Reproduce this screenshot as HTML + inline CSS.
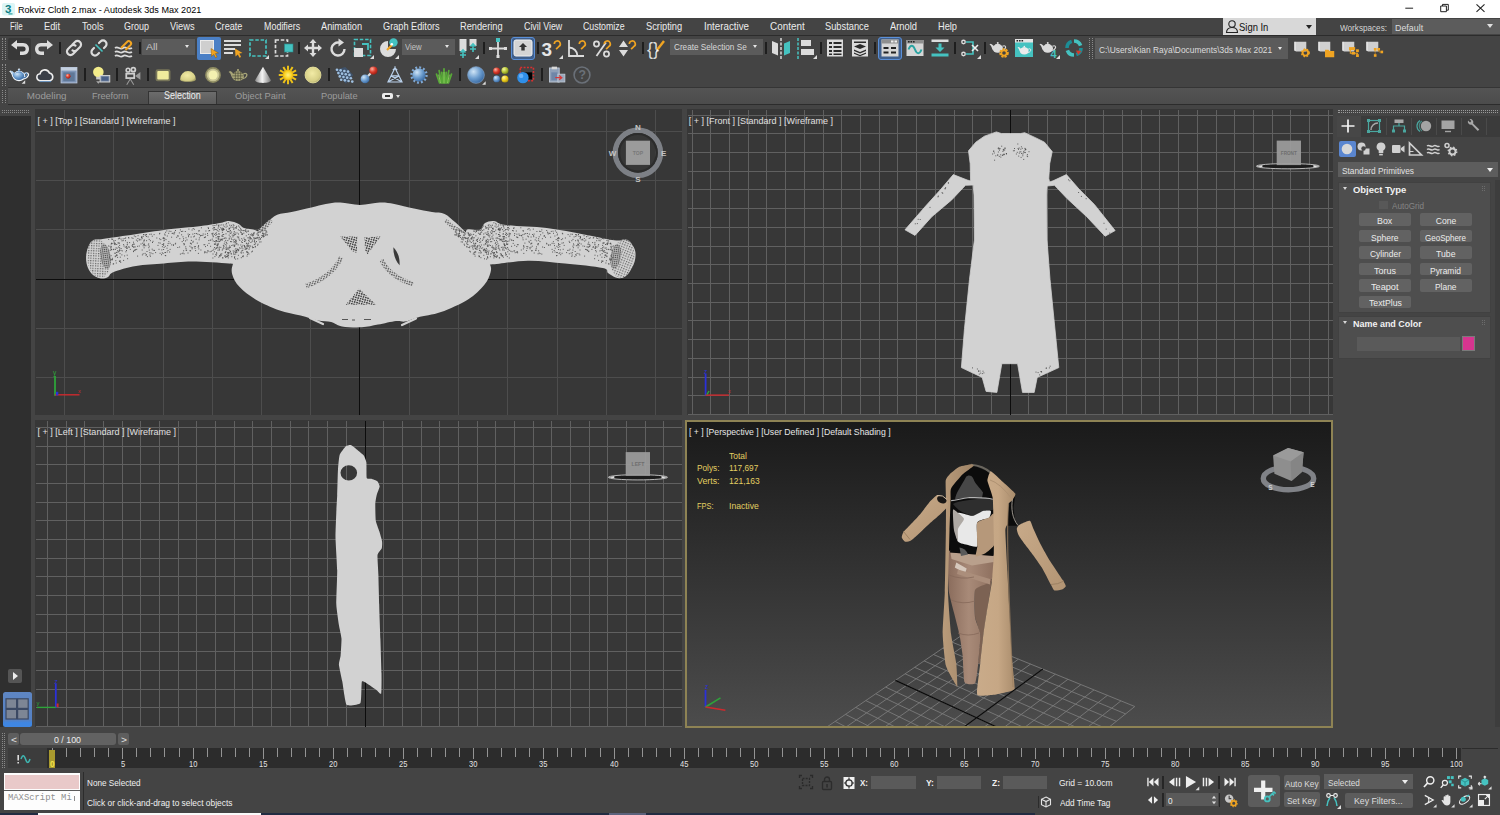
<!DOCTYPE html>
<html lang="en"><head><meta charset="utf-8"><title>Rokviz Cloth 2.max - Autodesk 3ds Max 2021</title>
<style>
*{box-sizing:border-box;margin:0;padding:0}
html,body{width:1500px;height:815px;overflow:hidden;background:#444;}
body{position:relative;font-family:"Liberation Sans",sans-serif;font-size:11px;color:#e4e4e4;}
.a{position:absolute}
.t{position:absolute;white-space:nowrap;line-height:1}
#title{left:0;top:0;width:1500px;height:18px;background:#fff;color:#000}
#menu{left:0;top:18px;width:1500px;height:18px;background:#444;border-bottom:1px solid #2c2c2c}
#menu .t{top:3px;font-size:11px;color:#e8e8e8}
  .vp{position:absolute;background:#373737;overflow:hidden}
.vl{position:absolute;white-space:nowrap;font-size:10px;color:#d8d8d8;left:4px;top:5px;line-height:1;letter-spacing:0}
.btn{position:absolute;background:#646464;border-radius:2px;color:#e6e6e6;font-size:10px;text-align:center;line-height:12px;height:12px}
</style></head>
<body>
<div id="title" class="a"><svg class="a" style="left:1px;top:2px" width="16" height="15" viewBox="0 0 16 15"><rect x="1" y="1" width="13" height="12.5" rx="2" fill="#dcf5f5"/><text x="4" y="10.6" font-family="Liberation Sans, sans-serif" font-size="11.5" font-weight="bold" fill="#0e7d84">3</text><rect x="7.5" y="11.3" width="4" height="1.2" fill="#2aa3a6"/></svg><div class="t" style="left:18.0px;top:4.8px;font-size:9.6px;color:#000;transform:scaleX(0.947);transform-origin:0 0;">Rokviz Cloth 2.max - Autodesk 3ds Max 2021</div><svg class="a" style="left:1400px;top:0" width="100" height="18" viewBox="0 0 100 18"><path d="M5.3 8.2h7.8" stroke="#222" stroke-width="1" fill="none"/><path d="M40.7 6h5.7v5.7h-5.700z M42.500 6v-1.600h5.800v5.800h-1.800" stroke="#222" stroke-width="1" fill="none"/><path d="M76.500 4.300l8 7.500M84.500 4.300l-8 7.500" stroke="#222" stroke-width="1.1" fill="none"/></svg></div>
<div id="menu" class="a"><div class="t" style="left:10.3px;top:4.1px;font-size:10.2px;color:#ececec;transform:scaleX(0.773);transform-origin:0 0;">File</div><div class="t" style="left:43.7px;top:4.1px;font-size:10.2px;color:#ececec;transform:scaleX(0.910);transform-origin:0 0;">Edit</div><div class="t" style="left:81.7px;top:4.1px;font-size:10.2px;color:#ececec;transform:scaleX(0.907);transform-origin:0 0;">Tools</div><div class="t" style="left:123.7px;top:4.1px;font-size:10.2px;color:#ececec;transform:scaleX(0.882);transform-origin:0 0;">Group</div><div class="t" style="left:170.0px;top:4.1px;font-size:10.2px;color:#ececec;transform:scaleX(0.914);transform-origin:0 0;">Views</div><div class="t" style="left:215.0px;top:4.1px;font-size:10.2px;color:#ececec;transform:scaleX(0.898);transform-origin:0 0;">Create</div><div class="t" style="left:263.7px;top:4.1px;font-size:10.2px;color:#ececec;transform:scaleX(0.877);transform-origin:0 0;">Modifiers</div><div class="t" style="left:320.8px;top:4.1px;font-size:10.2px;color:#ececec;transform:scaleX(0.908);transform-origin:0 0;">Animation</div><div class="t" style="left:383.3px;top:4.1px;font-size:10.2px;color:#ececec;transform:scaleX(0.901);transform-origin:0 0;">Graph Editors</div><div class="t" style="left:460.3px;top:4.1px;font-size:10.2px;color:#ececec;transform:scaleX(0.907);transform-origin:0 0;">Rendering</div><div class="t" style="left:523.7px;top:4.1px;font-size:10.2px;color:#ececec;transform:scaleX(0.870);transform-origin:0 0;">Civil View</div><div class="t" style="left:583.3px;top:4.1px;font-size:10.2px;color:#ececec;transform:scaleX(0.865);transform-origin:0 0;">Customize</div><div class="t" style="left:646.3px;top:4.1px;font-size:10.2px;color:#ececec;transform:scaleX(0.912);transform-origin:0 0;">Scripting</div><div class="t" style="left:703.7px;top:4.1px;font-size:10.2px;color:#ececec;transform:scaleX(0.956);transform-origin:0 0;">Interactive</div><div class="t" style="left:770.0px;top:4.1px;font-size:10.2px;color:#ececec;transform:scaleX(0.971);transform-origin:0 0;">Content</div><div class="t" style="left:825.3px;top:4.1px;font-size:10.2px;color:#ececec;transform:scaleX(0.911);transform-origin:0 0;">Substance</div><div class="t" style="left:890.0px;top:4.1px;font-size:10.2px;color:#ececec;transform:scaleX(0.916);transform-origin:0 0;">Arnold</div><div class="t" style="left:937.5px;top:4.1px;font-size:10.2px;color:#ececec;transform:scaleX(0.906);transform-origin:0 0;">Help</div><div class="a" style="left:1223px;top:0;width:93px;height:17px;background:#d8d8d8"></div><svg class="a" style="left:1225px;top:1px" width="14" height="15" viewBox="0 0 14 15"><circle cx="7" cy="5" r="3.2" fill="none" stroke="#222" stroke-width="1.1"/><path d="M1.5 13.5c0-3 2-5 5.5-5s5.5 2 5.5 5z" fill="none" stroke="#222" stroke-width="1.1"/></svg><div class="t" style="left:1239.0px;top:4.7px;font-size:10.2px;color:#111;transform:scaleX(0.926);transform-origin:0 0;">Sign In</div><div class="a" style="left:1306px;top:7px;width:0;height:0;border-left:3px solid transparent;border-right:3px solid transparent;border-top:4px solid #222"></div><div class="t" style="left:1340.0px;top:5.7px;font-size:8.8px;color:#d4d4d4;transform:scaleX(0.927);transform-origin:0 0;">Workspaces:</div><div class="a" style="left:1392px;top:1px;width:108px;height:15px;background:#5c5c5c"></div><div class="t" style="left:1394.6px;top:5.7px;font-size:8.8px;color:#dcdcdc;transform:scaleX(1.008);transform-origin:0 0;">Default</div><div class="a" style="left:1487px;top:6px;width:0;height:0;border-left:3px solid transparent;border-right:3px solid transparent;border-top:4px solid #e0e0e0"></div></div>
<svg class="a" width="0" height="0"><defs><radialGradient id="gb" cx=".35" cy=".3" r=".8"><stop offset="0" stop-color="#cfe4f6"/><stop offset=".5" stop-color="#6f9fd0"/><stop offset="1" stop-color="#2e5f9a"/></radialGradient><radialGradient id="gy" cx=".45" cy=".4" r=".7"><stop offset="0" stop-color="#f2eba6"/><stop offset=".7" stop-color="#d6cf86"/><stop offset="1" stop-color="#8d8957"/></radialGradient><radialGradient id="gr" cx=".35" cy=".3" r=".8"><stop offset="0" stop-color="#ffb0a0"/><stop offset=".5" stop-color="#d83a2a"/><stop offset="1" stop-color="#8a1810"/></radialGradient><radialGradient id="gg" cx=".35" cy=".3" r=".8"><stop offset="0" stop-color="#f4f4a0"/><stop offset=".5" stop-color="#b8c838"/><stop offset="1" stop-color="#6a7a18"/></radialGradient><radialGradient id="gyy" cx=".35" cy=".3" r=".8"><stop offset="0" stop-color="#fff6a0"/><stop offset=".5" stop-color="#f0d020"/><stop offset="1" stop-color="#a08808"/></radialGradient><radialGradient id="gsun" cx=".5" cy=".5" r=".5"><stop offset="0" stop-color="#fff080"/><stop offset=".7" stop-color="#f8d020"/><stop offset="1" stop-color="#e0a810"/></radialGradient><linearGradient id="gcone" x1="0" y1="0" x2="1" y2="0"><stop offset="0" stop-color="#8a8a8a"/><stop offset=".45" stop-color="#f4f4f4"/><stop offset="1" stop-color="#7a7a7a"/></linearGradient></defs></svg><div class="a" style="left:2px;top:38px;width:4px;height:22px;border-left:1px dotted #8a8a8a;border-right:1px dotted #8a8a8a"></div><div class="a" style="left:2px;top:64px;width:4px;height:22px;border-left:1px dotted #8a8a8a;border-right:1px dotted #8a8a8a"></div><div class="a" style="left:8px;top:38px;width:23px;height:22px;background:#383838;border-radius:2px"></div><div class="a" style="left:197px;top:37px;width:24px;height:23px;background:#4b80c6;border-radius:2px"></div><div class="a" style="left:511px;top:37px;width:24px;height:23px;background:#3f5f8c;border:1.500px solid #5a8fd8;border-radius:3px"></div><div class="a" style="left:878px;top:37px;width:24px;height:23px;background:#3f5f8c;border:1.500px solid #5a8fd8;border-radius:3px"></div><svg class="a" style="left:7.7px;top:35.5px" width="24" height="24" viewBox="0 0 24 24"><path d="M3 9l6-5v3h6c4 0 6 3 6 6s-2 6-6 6h-3v-3.5h3c2 0 2.6-1.2 2.6-2.5s-.6-2.5-2.6-2.5H9v3z" fill="#dcdcdc"/></svg><svg class="a" style="left:32.0px;top:35.5px" width="24" height="24" viewBox="0 0 24 24"><path d="M21 9l-6-5v3H9c-4 0-6 3-6 6s2 6 6 6h3v-3.5H9c-2 0-2.6-1.2-2.6-2.5S7 10.5 9 10.500h6v3z" fill="#dcdcdc"/></svg><svg class="a" style="left:62.0px;top:35.5px" width="24" height="24" viewBox="0 0 24 24"><g fill="none" stroke="#dcdcdc" stroke-width="2.2" stroke-linecap="round"><path d="M10.5 8.500l2.5-2.500a3.4 3.4 0 0 1 5 5l-3 3a3.4 3.4 0 0 1-4.5 .3"/><path d="M13.5 15.500l-2.5 2.500a3.4 3.4 0 0 1-5-5l3-3a3.4 3.4 0 0 1 4.5-.3"/></g></svg><svg class="a" style="left:87.0px;top:35.5px" width="24" height="24" viewBox="0 0 24 24"><g fill="none" stroke="#dcdcdc" stroke-width="2.2" stroke-linecap="round"><path d="M12 7l1.5-1.500a3.4 3.4 0 0 1 5 5L17 12"/><path d="M12 17l-1.5 1.500a3.4 3.4 0 0 1-5-5L7 12"/></g><path d="M8.5 8.500l7 7" stroke="#45c2c0" stroke-width="1.6"/></svg><svg class="a" style="left:112.0px;top:35.5px" width="24" height="24" viewBox="0 0 24 24"><g fill="none" stroke="#dcdcdc" stroke-width="1.7"><path d="M3 12c3-2.5 5 2.5 8 0s5 2.5 9 0"/><path d="M3 16c3-2.5 5 2.5 8 0s5 2.5 9 0"/><path d="M3 20c3-2.5 5 2.5 8 0s5 2.5 9 0"/></g><path d="M9 12l6-6a2.3 2.3 0 0 1 3.5 3l-5 5" fill="none" stroke="#f0a422" stroke-width="2"/></svg><svg class="a" style="left:196.7px;top:35.5px" width="24" height="24" viewBox="0 0 24 24"><rect x="3.5" y="4.5" width="13" height="13" fill="#cfcfcf" stroke="#ececec" stroke-width="1"/><path d="M14 12.500l7.5 4.5-3.2.6 1.8 3.4-1.6.8-1.7-3.4-2.3 2z" fill="#f0a422" stroke="#7a4b00" stroke-width=".4"/></svg><svg class="a" style="left:221.0px;top:35.5px" width="24" height="24" viewBox="0 0 24 24"><g fill="#dcdcdc"><rect x="3" y="4" width="17" height="2"/><rect x="3" y="8" width="17" height="2"/><rect x="3" y="12" width="11" height="2"/><rect x="3" y="16" width="9" height="2"/></g><path d="M14 12.500l7.5 4.5-3.2.6 1.8 3.4-1.6.8-1.7-3.4-2.3 2z" fill="#f0a422"/></svg><svg class="a" style="left:246.3px;top:35.5px" width="24" height="24" viewBox="0 0 24 24"><rect x="4" y="4" width="16" height="16" fill="none" stroke="#45c2c0" stroke-width="1.7" stroke-dasharray="3.5 1.8"/><path d="M23 19v4h-4z" fill="#ddd"/></svg><svg class="a" style="left:271.7px;top:35.5px" width="24" height="24" viewBox="0 0 24 24"><rect x="3.5" y="4" width="12" height="16" fill="none" stroke="#dcdcdc" stroke-width="1.7" stroke-dasharray="3.5 1.8"/><rect x="12.5" y="8" width="8.5" height="8" fill="#45c2c0" stroke="#2a8b8a" stroke-width=".6"/></svg><svg class="a" style="left:301.3px;top:35.5px" width="24" height="24" viewBox="0 0 24 24"><path d="M12 3l3.5 4h-2.300v3.800H17V8.500l4 3.5-4 3.500v-2.300h-3.800V17h2.300L12 21l-3.5-4h2.300v-3.800H7v2.300L3 12l4-3.500v2.300h3.800V7H8.500z" fill="#dcdcdc"/></svg><svg class="a" style="left:326.3px;top:35.5px" width="24" height="24" viewBox="0 0 24 24"><path d="M18.5 13a6.5 6.5 0 1 1-5-6.3" fill="none" stroke="#dcdcdc" stroke-width="2.4"/><path d="M12.5 2.500l5.5 4-5.5 4z" fill="#dcdcdc"/></svg><svg class="a" style="left:351.3px;top:35.5px" width="24" height="24" viewBox="0 0 24 24"><rect x="3.5" y="3.5" width="16" height="16" fill="none" stroke="#45c2c0" stroke-width="1.6" stroke-dasharray="3.5 1.8"/><rect x="3" y="12" width="9" height="9" fill="#dcdcdc"/><path d="M11 8h6v6" fill="none" stroke="#45c2c0" stroke-width="1.8"/><path d="M23 19v4h-4z" fill="#ddd"/></svg><svg class="a" style="left:376.3px;top:35.5px" width="24" height="24" viewBox="0 0 24 24"><path d="M12 13V5a8 8 0 1 0 8 8z" fill="#dcdcdc"/><circle cx="17.5" cy="6.5" r="4.2" fill="#45c2c0"/><path d="M11 14l5-5" stroke="#f0a422" stroke-width="2.2"/><circle cx="15.8" cy="8.2" r="1.3" fill="#fff"/><path d="M23 19v4h-4z" fill="#ddd"/></svg><svg class="a" style="left:456.3px;top:35.5px" width="24" height="24" viewBox="0 0 24 24"><rect x="3.500" y="3" width="7" height="12" fill="#dcdcdc"/><rect x="13.500" y="3" width="7" height="7" fill="#dcdcdc"/><g stroke="#45c2c0" stroke-width="1.600" fill="none"><path d="M7 22v-8M4 19h6M4.500 16.500L7 14l2.500 2.500"/><path d="M17 16V8M14 13h6M14.500 10.500L17 8l2.500 2.500"/></g><path d="M23 19v4h-4z" fill="#ddd"/></svg><svg class="a" style="left:485.5px;top:35.5px" width="24" height="24" viewBox="0 0 24 24"><path d="M12 4v17M4 12.500h16" stroke="#dcdcdc" stroke-width="1.8"/><rect x="10" y="2" width="4" height="4" fill="#45c2c0"/><rect x="3" y="11" width="3" height="3" fill="#dcdcdc"/><rect x="18" y="11" width="3" height="3" fill="#dcdcdc"/><rect x="10.5" y="19" width="3" height="3" fill="#dcdcdc"/></svg><svg class="a" style="left:510.8px;top:35.5px" width="24" height="24" viewBox="0 0 24 24"><rect x="3" y="4" width="18" height="16" rx="2" fill="#d4d4d4" stroke="#f0f0f0" stroke-width="1"/><path d="M12 7l4 4h-2.300v3.500h-3.400V11H8z" fill="#333"/></svg><svg class="a" style="left:539.7px;top:35.5px" width="24" height="24" viewBox="0 0 24 24"><text x="1.500" y="20.300" font-family="Liberation Sans,sans-serif" font-weight="bold" font-size="19" fill="#e6e6e6">3</text><path d="M14.3 8a3 3 0 1 1 4.4 2.6l-2.6 2.600" fill="none" stroke="#f0a422" stroke-width="1.700"/><path d="M23 19v4h-4z" fill="#ddd"/></svg><svg class="a" style="left:564.7px;top:35.5px" width="24" height="24" viewBox="0 0 24 24"><path d="M4 4v16h15M4 11.500a8.500 8.500 0 0 1 8.500 8.500" fill="none" stroke="#dcdcdc" stroke-width="1.800"/><path d="M14.3 8a3 3 0 1 1 4.4 2.6l-2.6 2.600" fill="none" stroke="#f0a422" stroke-width="1.700"/></svg><svg class="a" style="left:589.7px;top:35.5px" width="24" height="24" viewBox="0 0 24 24"><circle cx="6.500" cy="8" r="2.600" fill="none" stroke="#dcdcdc" stroke-width="1.700"/><circle cx="16.500" cy="18" r="2.600" fill="none" stroke="#dcdcdc" stroke-width="1.700"/><path d="M16 6.500L6.500 20" stroke="#dcdcdc" stroke-width="1.800"/><path d="M14.3 8a3 3 0 1 1 4.4 2.6l-2.6 2.600" fill="none" stroke="#f0a422" stroke-width="1.700"/></svg><svg class="a" style="left:614.7px;top:35.5px" width="24" height="24" viewBox="0 0 24 24"><path d="M4 11l4.500-6.500L13 11zM4 14l4.500 6.500L13 14z" fill="#dcdcdc"/><path d="M14.3 8a3 3 0 1 1 4.4 2.6l-2.6 2.600" fill="none" stroke="#f0a422" stroke-width="1.700"/></svg><svg class="a" style="left:644.7px;top:35.5px" width="24" height="24" viewBox="0 0 24 24"><text x="2" y="19" font-family="Liberation Sans,sans-serif" font-size="18" fill="#dcdcdc">{}</text><path d="M12 14l7-9" stroke="#f0a422" stroke-width="2.4"/><path d="M11 16l1-3 1.5 1.200z" fill="#fff"/></svg><svg class="a" style="left:768.8px;top:35.5px" width="24" height="24" viewBox="0 0 24 24"><path d="M3 5l6 2.500v12L3 17z" fill="#dcdcdc"/><path d="M21 5l-6 2.500v12l6-2.500z" fill="#45c2c0"/><path d="M12 2v21" stroke="#eee" stroke-width="1.3" stroke-dasharray="3 1.5"/></svg><svg class="a" style="left:793.8px;top:35.5px" width="24" height="24" viewBox="0 0 24 24"><path d="M4 2v21" stroke="#45c2c0" stroke-width="1.5" stroke-dasharray="3 1.5"/><rect x="7" y="4" width="10" height="6" fill="#dcdcdc"/><rect x="7" y="13" width="13" height="6" fill="#dcdcdc"/><path d="M23 19v4h-4z" fill="#ddd"/></svg><svg class="a" style="left:823.0px;top:35.5px" width="24" height="24" viewBox="0 0 24 24"><rect x="4" y="3.5" width="16" height="17" fill="#dcdcdc"/><g fill="#2b2b2b"><rect x="6" y="6" width="3" height="2"/><rect x="10.5" y="6" width="8" height="2"/><rect x="6" y="10" width="3" height="2"/><rect x="10.5" y="10" width="8" height="2"/><rect x="6" y="14" width="3" height="2"/><rect x="10.5" y="14" width="8" height="2"/><rect x="6" y="17.5" width="3" height="1.5"/><rect x="10.5" y="17.5" width="8" height="1.5"/></g></svg><svg class="a" style="left:848.0px;top:35.5px" width="24" height="24" viewBox="0 0 24 24"><rect x="4" y="3.5" width="16" height="17" fill="#dcdcdc"/><rect x="6" y="5.5" width="12" height="1.5" fill="#2b2b2b"/><g fill="#2b2b2b"><path d="M12 8l6 2.5-6 2.5-6-2.500z"/><path d="M6 13.500l6 2.5 6-2.500v1.500l-6 2.5-6-2.500z"/><path d="M6 16.500l6 2.5 6-2.500v1.300l-6 2.4-6-2.400z"/></g></svg><svg class="a" style="left:877.7px;top:35.5px" width="24" height="24" viewBox="0 0 24 24"><rect x="3.5" y="3.5" width="17" height="17" fill="#d6d6d6"/><rect x="3.5" y="3.5" width="17" height="4" fill="#8f8f8f"/><rect x="13" y="4.5" width="2.5" height="2" fill="#eee"/><rect x="16.5" y="4.5" width="2.5" height="2" fill="#eee"/><g fill="#222"><rect x="5.5" y="11" width="5" height="2"/><rect x="13" y="11" width="5" height="2"/><rect x="5.5" y="15.5" width="5" height="2"/><rect x="13" y="15.5" width="5" height="2"/></g></svg><svg class="a" style="left:902.7px;top:35.5px" width="24" height="24" viewBox="0 0 24 24"><rect x="3.5" y="4" width="17" height="16" fill="#d6d6d6"/><rect x="3.5" y="4" width="17" height="3.5" fill="#8f8f8f"/><g fill="#222"><rect x="5" y="5" width="1.6" height="1.5"/><rect x="7.5" y="5" width="1.6" height="1.5"/><rect x="10" y="5" width="1.6" height="1.5"/></g><path d="M5.5 13.500c2-5 4.5-5 6.5 0s4.5 5 6.5 0" fill="none" stroke="#2aa3a1" stroke-width="2"/></svg><svg class="a" style="left:927.7px;top:35.5px" width="24" height="24" viewBox="0 0 24 24"><rect x="3.5" y="3.5" width="17" height="2.5" fill="#dcdcdc"/><rect x="3.5" y="17.5" width="17" height="3" fill="#45c2c0"/><path d="M10.5 7.500h3v4h3l-4.5 4.5-4.5-4.500h3z" fill="#45c2c0"/></svg><svg class="a" style="left:958.0px;top:35.5px" width="24" height="24" viewBox="0 0 24 24"><g fill="none" stroke="#45c2c0" stroke-width="1.6"><path d="M8 6h7v12H8"/></g><path d="M14 9l6 6M20 9l-6 6" stroke="#eee" stroke-width="1.6"/><g fill="#ddd"><circle cx="5.5" cy="6" r="2.4"/><circle cx="5.5" cy="18" r="2.4"/></g><g fill="#444"><circle cx="5.5" cy="6" r="1"/><circle cx="5.5" cy="18" r="1"/></g><path d="M23 19v4h-4z" fill="#ddd"/></svg><svg class="a" style="left:987.0px;top:35.5px" width="24" height="24" viewBox="0 0 24 24"><g fill="#dcdcdc" stroke="none" stroke-width="0" transform="translate(1,1.500) scale(.780)"><path d="M6.200 15.800C4.300 13.500 4.800 10.300 1.800 9l1.700-1C6.300 9 6.800 11 8.300 12z"/><ellipse cx="12.500" cy="14" rx="6.800" ry="5.400"/><path d="M8.800 9.500c1.200-1.500 6.200-1.500 7.400 0z"/><circle cx="12.500" cy="7" r="1.300"/><path d="M18.600 11.200c3-1.600 4.700.300 3.700 2.400s-2.600 2.900-4.200 3.100" fill="none" stroke="#dcdcdc" stroke-width="1.500"/></g><circle cx="17" cy="17" r="3.600" fill="none" stroke="#f0a422" stroke-width="2.400" stroke-dasharray="2 1"/><circle cx="17" cy="17" r="2.600" fill="none" stroke="#f0a422" stroke-width="1.600"/></svg><svg class="a" style="left:1012.0px;top:35.5px" width="24" height="24" viewBox="0 0 24 24"><rect x="3" y="3" width="18" height="18" fill="#45c2c0"/><rect x="3" y="3" width="18" height="3.5" fill="#e4e4e4"/><g fill="#222"><rect x="4.5" y="4" width="1.6" height="1.5"/><rect x="7" y="4" width="1.6" height="1.5"/><rect x="9.5" y="4" width="1.6" height="1.5"/></g><g fill="#ececec" stroke="none" stroke-width="0" transform="translate(4.300,6) scale(.640)"><path d="M6.200 15.800C4.300 13.500 4.800 10.300 1.800 9l1.700-1C6.300 9 6.800 11 8.300 12z"/><ellipse cx="12.500" cy="14" rx="6.800" ry="5.400"/><path d="M8.800 9.500c1.200-1.500 6.200-1.500 7.400 0z"/><circle cx="12.500" cy="7" r="1.300"/><path d="M18.600 11.200c3-1.600 4.700.300 3.700 2.400s-2.600 2.900-4.200 3.100" fill="none" stroke="#ececec" stroke-width="1.500"/></g></svg><svg class="a" style="left:1037.0px;top:35.5px" width="24" height="24" viewBox="0 0 24 24"><g fill="#dcdcdc" stroke="none" stroke-width="0" transform="translate(1,1.500) scale(.780)"><path d="M6.200 15.800C4.300 13.500 4.800 10.300 1.800 9l1.700-1C6.300 9 6.800 11 8.300 12z"/><ellipse cx="12.500" cy="14" rx="6.800" ry="5.400"/><path d="M8.800 9.500c1.200-1.500 6.200-1.500 7.400 0z"/><circle cx="12.500" cy="7" r="1.300"/><path d="M18.600 11.200c3-1.600 4.700.300 3.700 2.400s-2.600 2.900-4.200 3.100" fill="none" stroke="#dcdcdc" stroke-width="1.500"/></g><text x="13.500" y="22" font-family="Liberation Sans,sans-serif" font-weight="bold" font-size="11" fill="#45c2c0">4</text><path d="M23 19v4h-4z" fill="#ddd"/></svg><svg class="a" style="left:1062.0px;top:35.5px" width="24" height="24" viewBox="0 0 24 24"><g fill="none" stroke-width="3.6"><path d="M12 5a7 7 0 0 1 6.600 4.700" stroke="#45c2c0"/><path d="M19 12a7 7 0 0 1-4.700 6.600" stroke="#1c8d96"/><path d="M12 19a7 7 0 0 1-6.600-4.700" stroke="#45c2c0"/><path d="M5 12a7 7 0 0 1 4.700-6.600" stroke="#1c8d96"/></g><path d="M14 14.500l5.500 .5-3.300 3.800z" fill="#d43a2a"/></svg><svg class="a" style="left:1288.8px;top:35.5px" width="24" height="24" viewBox="0 0 24 24"><g transform="translate(12 12) scale(.880) translate(-12 -12)"><g transform="translate(1,2)"><path d="M4 3h13v11H5.500a1.800 1.800 0 0 1-1.500-2z" fill="#d0d0d0"/><path d="M4 3v10" stroke="#fff" stroke-width="1.200"/></g><circle cx="17" cy="17.500" r="3.200" fill="none" stroke="#f0a422" stroke-width="2.200"/><circle cx="17" cy="17.500" r="4.400" fill="none" stroke="#f0a422" stroke-width="1.400" stroke-dasharray="1.800 1.800"/></g></svg><svg class="a" style="left:1313.0px;top:35.5px" width="24" height="24" viewBox="0 0 24 24"><g transform="translate(12 12) scale(.880) translate(-12 -12)"><g transform="translate(1,2)"><path d="M4 3h13v11H5.500a1.800 1.800 0 0 1-1.500-2z" fill="#d0d0d0"/><path d="M4 3v10" stroke="#fff" stroke-width="1.200"/></g><path d="M12 14h4l1.200 1.500H22.500V22.500H12z" fill="#f0a422"/></g></svg><svg class="a" style="left:1336.8px;top:35.5px" width="24" height="24" viewBox="0 0 24 24"><g transform="translate(12 12) scale(.880) translate(-12 -12)"><g transform="translate(1,2)"><path d="M4 3h13v11H5.500a1.800 1.800 0 0 1-1.500-2z" fill="#d0d0d0"/><path d="M4 3v10" stroke="#fff" stroke-width="1.200"/></g><g fill="#f0a422"><rect x="12" y="11" width="7" height="3.500"/><rect x="15" y="16.500" width="4" height="3"/><rect x="20" y="19" width="3.200" height="3.200"/><rect x="20" y="13.500" width="3.200" height="3.200"/></g><path d="M13.500 14v4h2M19 18h2.500v1" stroke="#f0a422" stroke-width="1.200" fill="none"/></g></svg><svg class="a" style="left:1360.5px;top:35.5px" width="24" height="24" viewBox="0 0 24 24"><g transform="translate(12 12) scale(.880) translate(-12 -12)"><g transform="translate(1,2)"><path d="M4 3h13v11H5.500a1.800 1.800 0 0 1-1.500-2z" fill="#d0d0d0"/><path d="M4 3v10" stroke="#fff" stroke-width="1.200"/></g><g fill="#f0a422"><rect x="13" y="12" width="3" height="3"/><rect x="17" y="12" width="3" height="3"/><rect x="20.500" y="15" width="3" height="3"/><rect x="13" y="19" width="3" height="3"/></g><path d="M14.500 15v4M18.500 15v1.500h2" stroke="#f0a422" stroke-width="1.100" fill="none" stroke-dasharray="1.200 1"/></g></svg><div class="a" style="left:58.5px;top:41.5px;width:2px;height:12.5px;background:#1e1e1e"></div><div class="a" style="left:138.5px;top:41.5px;width:2px;height:12.5px;background:#1e1e1e"></div><div class="a" style="left:297.5px;top:41.5px;width:2px;height:12.5px;background:#1e1e1e"></div><div class="a" style="left:482.5px;top:41.5px;width:2px;height:12.5px;background:#1e1e1e"></div><div class="a" style="left:536.5px;top:41.5px;width:2px;height:12.5px;background:#1e1e1e"></div><div class="a" style="left:641.5px;top:41.5px;width:2px;height:12.5px;background:#1e1e1e"></div><div class="a" style="left:765px;top:41.5px;width:2px;height:12.5px;background:#1e1e1e"></div><div class="a" style="left:820px;top:41.5px;width:2px;height:12.5px;background:#1e1e1e"></div><div class="a" style="left:874px;top:41.5px;width:2px;height:12.5px;background:#1e1e1e"></div><div class="a" style="left:954px;top:41.5px;width:2px;height:12.5px;background:#1e1e1e"></div><div class="a" style="left:983.5px;top:41.5px;width:2px;height:12.5px;background:#1e1e1e"></div><div class="a" style="left:1089px;top:38px;width:4px;height:21px;border-left:1px dotted #8a8a8a;border-right:1px dotted #8a8a8a"></div><div class="a" style="left:142px;top:39px;width:53px;height:15.5px;background:#5b5b5b"></div><div class="t" style="left:145.8px;top:43.2px;font-size:8.8px;color:#c4c4c4;transform:scaleX(1.196);transform-origin:0 0;">All</div><div class="a" style="left:185px;top:44.8px;width:0;height:0;border-left:2.6px solid transparent;border-right:2.6px solid transparent;border-top:3.4px solid #e6e6e6"></div><div class="a" style="left:402px;top:39px;width:53px;height:15.5px;background:#5b5b5b"></div><div class="t" style="left:405.0px;top:43.2px;font-size:8.8px;color:#c4c4c4;transform:scaleX(0.883);transform-origin:0 0;">View</div><div class="a" style="left:445px;top:44.8px;width:0;height:0;border-left:2.6px solid transparent;border-right:2.6px solid transparent;border-top:3.4px solid #e6e6e6"></div><div class="a" style="left:670px;top:39px;width:93px;height:15.5px;background:#5b5b5b"></div><div class="t" style="left:674.0px;top:42.9px;font-size:8.8px;color:#d8d8d8;transform:scaleX(0.929);transform-origin:0 0;">Create Selection Se</div><div class="a" style="left:753px;top:44.8px;width:0;height:0;border-left:2.6px solid transparent;border-right:2.6px solid transparent;border-top:3.4px solid #e6e6e6"></div><div class="a" style="left:1095px;top:38px;width:193px;height:21px;background:#5b5b5b"></div><div class="t" style="left:1099.0px;top:45.6px;font-size:8.8px;color:#dcdcdc;transform:scaleX(0.952);transform-origin:0 0;">C:\Users\Kian Raya\Documents\3ds Max 2021</div><div class="a" style="left:1278px;top:46.5px;width:0;height:0;border-left:2.6px solid transparent;border-right:2.6px solid transparent;border-top:3.4px solid #e6e6e6"></div><svg class="a" style="left:7.0px;top:62.5px" width="24" height="24" viewBox="0 0 24 24"><g transform="translate(12 12) scale(.880) translate(-12 -12)"><g fill="#f2f6fa" stroke="none" stroke-width="0" transform="translate(-1.200,-1.500) scale(1.060)"><path d="M6.200 15.800C4.300 13.500 4.800 10.300 1.800 9l1.700-1C6.300 9 6.800 11 8.300 12z"/><ellipse cx="12.500" cy="14" rx="6.800" ry="5.400"/><path d="M8.800 9.500c1.200-1.500 6.200-1.500 7.400 0z"/><circle cx="12.500" cy="7" r="1.300"/><path d="M18.600 11.200c3-1.600 4.700.300 3.700 2.400s-2.600 2.900-4.200 3.100" fill="none" stroke="#f2f6fa" stroke-width="1.500"/></g><g fill="url(#gb)" stroke="none" stroke-width="0" transform="translate(0.600,0.200) scale(.900)"><path d="M6.200 15.800C4.300 13.500 4.800 10.300 1.800 9l1.700-1C6.300 9 6.800 11 8.300 12z"/><ellipse cx="12.500" cy="14" rx="6.800" ry="5.400"/><path d="M8.800 9.500c1.200-1.500 6.200-1.500 7.400 0z"/><circle cx="12.500" cy="7" r="1.300"/><path d="M18.600 11.200c3-1.600 4.700.300 3.700 2.400s-2.600 2.900-4.200 3.100" fill="none" stroke="url(#gb)" stroke-width="1.500"/></g><path d="M19 18v4h-4z" fill="#ddd"/></g></svg><svg class="a" style="left:32.7px;top:62.5px" width="24" height="24" viewBox="0 0 24 24"><g transform="translate(12 12) scale(.880) translate(-12 -12)"><path d="M7 18.500a4 4 0 0 1-.5-8 5.5 5.5 0 0 1 10.5-.8 4.5 4.5 0 0 1 .5 8.800z" fill="#3a3f48" stroke="#eee" stroke-width="1.8"/><path d="M6 19.500h13" stroke="#5f8fc4" stroke-width="1"/></g></svg><svg class="a" style="left:57.0px;top:62.5px" width="24" height="24" viewBox="0 0 24 24"><g transform="translate(12 12) scale(.880) translate(-12 -12)"><rect x="3" y="3.5" width="18" height="17.5" fill="#7f96b8" stroke="#b9c8de" stroke-width="1"/><rect x="3" y="3.5" width="18" height="3.5" fill="#c4d0e0"/><rect x="5.5" y="9" width="13" height="10" fill="#5f7898"/><circle cx="11" cy="13.5" r="2.8" fill="url(#gr)"/></g></svg><svg class="a" style="left:88.8px;top:62.5px" width="24" height="24" viewBox="0 0 24 24"><g transform="translate(12 12) scale(.880) translate(-12 -12)"><circle cx="9" cy="8.5" r="6" fill="#f3ec8a"/><rect x="6.5" y="14" width="5" height="3" fill="#c9c9c9"/><path d="M6.5 19l2.5 3 2.5-3z" fill="#aaa"/><rect x="11" y="12.5" width="11" height="7.5" fill="#7f8fa8" stroke="#d8d8d8" stroke-width="1"/><rect x="12.5" y="14" width="8" height="4.5" fill="#4a6088"/></g></svg><svg class="a" style="left:119.7px;top:62.5px" width="24" height="24" viewBox="0 0 24 24"><g transform="translate(12 12) scale(.880) translate(-12 -12)"><g fill="#cfcfcf"><circle cx="7.5" cy="6.5" r="3"/><circle cx="13.5" cy="6" r="3.3"/><rect x="4.5" y="9.5" width="11" height="7" /><path d="M15.5 13l6-4.500v9z" fill="#9a9a9a"/></g><g fill="#444"><circle cx="7.5" cy="6.5" r="1.2"/><circle cx="13.5" cy="6" r="1.3"/><rect x="6.5" y="11.5" width="7" height="3"/></g><path d="M10 16.500L6 23M10 16.500l4 6.5" stroke="#9a9a9a" stroke-width="1.2"/></g></svg><svg class="a" style="left:151.0px;top:62.5px" width="24" height="24" viewBox="0 0 24 24"><g transform="translate(12 12) scale(.880) translate(-12 -12)"><rect x="3.5" y="5.5" width="17" height="13.5" rx="2.5" fill="#9a9668" opacity=".6"/><rect x="5.5" y="7.5" width="13" height="9.5" rx="1" fill="#f0eb9c"/></g></svg><svg class="a" style="left:176.0px;top:62.5px" width="24" height="24" viewBox="0 0 24 24"><g transform="translate(12 12) scale(.880) translate(-12 -12)"><path d="M3 17a9 9.5 0 0 1 18 0c0 1.6-4 2.8-9 2.800s-9-1.2-9-2.800z" fill="url(#gy)"/></g></svg><svg class="a" style="left:201.0px;top:62.5px" width="24" height="24" viewBox="0 0 24 24"><g transform="translate(12 12) scale(.880) translate(-12 -12)"><circle cx="12" cy="12" r="9" fill="#8f8c62"/><circle cx="12" cy="12" r="7.2" fill="#c9c595"/><circle cx="12" cy="12" r="5.2" fill="#f4f0b0"/></g></svg><svg class="a" style="left:226.0px;top:62.5px" width="24" height="24" viewBox="0 0 24 24"><g transform="translate(12 12) scale(.880) translate(-12 -12)"><g fill="#a9a678" stroke="none" stroke-width="0" transform="translate(-.500,-.500)"><path d="M6.200 15.800C4.300 13.500 4.800 10.300 1.800 9l1.700-1C6.300 9 6.800 11 8.300 12z"/><ellipse cx="12.500" cy="14" rx="6.800" ry="5.400"/><path d="M8.800 9.500c1.200-1.500 6.200-1.500 7.400 0z"/><circle cx="12.500" cy="7" r="1.300"/><path d="M18.600 11.200c3-1.600 4.700.300 3.700 2.400s-2.600 2.900-4.200 3.100" fill="none" stroke="#a9a678" stroke-width="1.500"/></g><g stroke="#4a4a38" stroke-width=".7" fill="none"><path d="M6 10h12M5.5 13h13M7 16h10M9 7.500v11M12 7v11.500M15 7.500v11"/></g></g></svg><svg class="a" style="left:250.5px;top:62.5px" width="24" height="24" viewBox="0 0 24 24"><g transform="translate(12 12) scale(.880) translate(-12 -12)"><path d="M12 2.500L21 18c0 1.8-4 3-9 3s-9-1.2-9-3z" fill="url(#gcone)"/></g></svg><svg class="a" style="left:276.0px;top:62.5px" width="24" height="24" viewBox="0 0 24 24"><g transform="translate(12 12) scale(.880) translate(-12 -12)"><g stroke="#f0c418" stroke-width="2.2"><path d="M12 12L22.5 12.0"/><path d="M12 12L21.1 17.2"/><path d="M12 12L17.2 21.1"/><path d="M12 12L12.0 22.5"/><path d="M12 12L6.8 21.1"/><path d="M12 12L2.9 17.2"/><path d="M12 12L1.5 12.0"/><path d="M12 12L2.9 6.8"/><path d="M12 12L6.7 2.9"/><path d="M12 12L12.0 1.5"/><path d="M12 12L17.2 2.9"/><path d="M12 12L21.1 6.7"/></g><circle cx="12" cy="12" r="6.2" fill="url(#gsun)"/></g></svg><svg class="a" style="left:300.8px;top:62.5px" width="24" height="24" viewBox="0 0 24 24"><g transform="translate(12 12) scale(.880) translate(-12 -12)"><circle cx="12" cy="12" r="9" fill="url(#gy)" stroke="#e8e29c" stroke-width="1"/></g></svg><svg class="a" style="left:332.0px;top:62.5px" width="24" height="24" viewBox="0 0 24 24"><g transform="translate(12 12) scale(.880) translate(-12 -12)"><path d="M2.5 6l11-3 9 9-8.5 10z" fill="#3c5f8a" opacity=".55"/><circle cx="4.0" cy="6.0" r="1.5" fill="#9fc0e0"/><circle cx="8.2" cy="6.7" r="1.5" fill="#9fc0e0"/><circle cx="12.4" cy="7.4" r="1.5" fill="#9fc0e0"/><circle cx="16.6" cy="8.1" r="1.5" fill="#9fc0e0"/><circle cx="5.6" cy="9.8" r="1.5" fill="#9fc0e0"/><circle cx="9.8" cy="10.5" r="1.5" fill="#9fc0e0"/><circle cx="14.0" cy="11.2" r="1.5" fill="#9fc0e0"/><circle cx="18.2" cy="11.9" r="1.5" fill="#9fc0e0"/><circle cx="7.2" cy="13.6" r="1.5" fill="#9fc0e0"/><circle cx="11.4" cy="14.3" r="1.5" fill="#9fc0e0"/><circle cx="15.6" cy="15.0" r="1.5" fill="#9fc0e0"/><circle cx="19.8" cy="15.7" r="1.5" fill="#9fc0e0"/><circle cx="8.8" cy="17.4" r="1.5" fill="#9fc0e0"/><circle cx="13.0" cy="18.1" r="1.5" fill="#9fc0e0"/><circle cx="17.2" cy="18.8" r="1.5" fill="#9fc0e0"/><circle cx="21.4" cy="19.5" r="1.5" fill="#9fc0e0"/></g></svg><svg class="a" style="left:357.0px;top:62.5px" width="24" height="24" viewBox="0 0 24 24"><g transform="translate(12 12) scale(.880) translate(-12 -12)"><path d="M8 16l8-8" stroke="#ddd" stroke-width="2.4"/><circle cx="7.5" cy="16.5" r="5" fill="url(#gb)"/><circle cx="17" cy="7" r="4.6" fill="url(#gr)"/></g></svg><svg class="a" style="left:383.0px;top:62.5px" width="24" height="24" viewBox="0 0 24 24"><g transform="translate(12 12) scale(.880) translate(-12 -12)"><g fill="none" stroke="#b9d0ea" stroke-width="1.3"><path d="M12 4L4 20h16zM12 4v-2M7.5 13h9M4 20l12.5-7M20 20L7.5 13M12 4l-2.5 2.500M12 4l2.5 2.5"/></g></g></svg><svg class="a" style="left:407.0px;top:62.5px" width="24" height="24" viewBox="0 0 24 24"><g transform="translate(12 12) scale(.880) translate(-12 -12)"><circle cx="12" cy="12" r="7.5" fill="url(#gb)"/><circle cx="12" cy="12" r="8.6" fill="none" stroke="#7fa8d4" stroke-width="2.6" stroke-dasharray="2.2 2.3"/></g></svg><svg class="a" style="left:432.0px;top:62.5px" width="24" height="24" viewBox="0 0 24 24"><g transform="translate(12 12) scale(.880) translate(-12 -12)"><g fill="none" stroke-linecap="round"><path d="M12 21V5M9 21L6.5 7M15 21l2.5-14M7 21L3.5 11M17 21l3.5-10M10.5 21L9.5 9M13.5 21l1-12" stroke="#58a838" stroke-width="2"/><path d="M12 21V9M8 21L6 12M16 21l2-9" stroke="#8fd060" stroke-width="1"/></g></g></svg><svg class="a" style="left:464.0px;top:62.5px" width="24" height="24" viewBox="0 0 24 24"><g transform="translate(12 12) scale(.880) translate(-12 -12)"><circle cx="12" cy="12" r="9.5" fill="url(#gb)" stroke="#7d9cc0" stroke-width=".8"/><path d="M23 19v4h-4z" fill="#ddd"/></g></svg><svg class="a" style="left:489.0px;top:62.5px" width="24" height="24" viewBox="0 0 24 24"><g transform="translate(12 12) scale(.880) translate(-12 -12)"><circle cx="7" cy="7.5" r="4" fill="url(#gr)"/><circle cx="16.5" cy="7" r="4" fill="url(#gg)"/><circle cx="7" cy="16.5" r="3.8" fill="url(#gb)"/><circle cx="16.5" cy="16.5" r="4" fill="url(#gyy)"/></g></svg><svg class="a" style="left:514.0px;top:62.5px" width="24" height="24" viewBox="0 0 24 24"><g transform="translate(12 12) scale(.880) translate(-12 -12)"><rect x="9" y="9" width="10" height="8" fill="#0"/><rect x="5.5" y="3.5" width="15" height="15" fill="none" stroke="#d83030" stroke-width="1.8" stroke-dasharray="2.2 1.6"/><circle cx="8.5" cy="15" r="6.5" fill="#2f8fe8"/><circle cx="6.5" cy="13" r="2.5" fill="#7fc0ff" opacity=".7"/></g></svg><svg class="a" style="left:544.7px;top:62.5px" width="24" height="24" viewBox="0 0 24 24"><g transform="translate(12 12) scale(.880) translate(-12 -12)"><rect x="3.5" y="4" width="11" height="16" fill="#8fa0b8" stroke="#c0cad8" stroke-width="1"/><rect x="6" y="2.5" width="6" height="3" fill="#d8d8d8"/><rect x="5.5" y="9" width="7" height="9" fill="#6f86a8"/><rect x="13" y="11" width="8" height="9" fill="#9aa8bc" stroke="#c8d0dc" stroke-width=".8"/><path d="M10 15h7M14.5 12.500l3 2.5-3 2.5" stroke="#d83a3a" stroke-width="1.4" fill="none"/></g></svg><svg class="a" style="left:569.7px;top:62.5px" width="24" height="24" viewBox="0 0 24 24"><g transform="translate(12 12) scale(.880) translate(-12 -12)"><circle cx="12" cy="12" r="9" fill="none" stroke="#6a7078" stroke-width="1.8"/><text x="8" y="17" font-family="Liberation Sans,sans-serif" font-weight="bold" font-size="14" fill="#6a7078">?</text></g></svg><div class="a" style="left:84px;top:68px;width:2px;height:12.5px;background:#1e1e1e"></div><div class="a" style="left:115.7px;top:68px;width:2px;height:12.5px;background:#1e1e1e"></div><div class="a" style="left:147px;top:68px;width:2px;height:12.5px;background:#1e1e1e"></div><div class="a" style="left:328px;top:68px;width:2px;height:12.5px;background:#1e1e1e"></div><div class="a" style="left:459px;top:68px;width:2px;height:12.5px;background:#1e1e1e"></div><div class="a" style="left:540.7px;top:68px;width:2px;height:12.5px;background:#1e1e1e"></div><div class="a" style="left:2px;top:90px;width:4px;height:13px;border-left:1px dotted #8a8a8a;border-right:1px dotted #8a8a8a"></div><div class="a" style="left:8px;top:86.500px;width:1492px;height:18px;background:linear-gradient(#545454,#4c4c4c);border-top:1px solid #353535;border-bottom:1px solid #2c2c2c"></div><div class="a" style="left:147.500px;top:90.500px;width:69px;height:13.500px;background:linear-gradient(#6c6c6c,#5b5b5b);border:1px solid #343434;border-bottom:none"></div><div class="t" style="left:26.8px;top:91.4px;font-size:9.8px;color:#9c9c9c;">Modeling</div><div class="t" style="left:91.7px;top:91.4px;font-size:9.8px;color:#9c9c9c;transform:scaleX(0.921);transform-origin:0 0;">Freeform</div><div class="t" style="left:163.6px;top:91.2px;font-size:10px;color:#eeeeee;transform:scaleX(0.895);transform-origin:0 0;">Selection</div><div class="t" style="left:235.3px;top:91.4px;font-size:9.8px;color:#9c9c9c;transform:scaleX(0.950);transform-origin:0 0;">Object Paint</div><div class="t" style="left:320.7px;top:91.4px;font-size:9.8px;color:#9c9c9c;transform:scaleX(0.946);transform-origin:0 0;">Populate</div><div class="a" style="left:381.700px;top:92.500px;width:11px;height:6.500px;background:#ececec;border-radius:2px"></div><div class="a" style="left:384.500px;top:94.500px;width:5px;height:2.500px;background:#333"></div><div class="a" style="left:396px;top:95px;width:0;height:0;border-left:2.500px solid transparent;border-right:2.500px solid transparent;border-top:3px solid #ddd"></div>
<div class="a" style="left:0;top:116px;width:31px;height:611px;background:#2f2f2f"></div><div class="a" style="left:2px;top:110px;width:27px;height:3px;border-top:1px dotted #888;border-bottom:1px dotted #888"></div><div class="a" style="left:8px;top:669px;width:14px;height:14px;background:#555;border-radius:2px"></div><div class="a" style="left:13px;top:672px;width:0;height:0;border-top:4px solid transparent;border-bottom:4px solid transparent;border-left:5px solid #eee"></div><div class="a" style="left:3px;top:692.3px;width:28.7px;height:34.5px;background:linear-gradient(#5e86c3 0%,#5580c2 80%,#3f86e2 88%,#3f86e2 100%);border-radius:2.5px"></div><svg class="a" style="left:5px;top:697px" width="25" height="24" viewBox="0 0 25 24"><g fill="#7d8695" stroke="#3b4963" stroke-width="1.2"><rect x="1" y="1.8" width="10.6" height="9.6"/><rect x="12.6" y="1.8" width="10.6" height="9.6"/><rect x="1" y="12.4" width="10.6" height="9.6"/><rect x="12.6" y="12.4" width="10.6" height="9.6"/></g></svg><div class="vp" style="left:35px;top:109px;width:647px;height:306px"><svg class="a" style="left:0;top:0" width="647" height="306" viewBox="0 0 647 306" shape-rendering="crispEdges"><path d="M29 0v306M78 0v306M128 0v306M177 0v306M226 0v306M275 0v306M324 0v306M374 0v306M423 0v306M472 0v306M522 0v306M571 0v306M620 0v306M0 22h647M0 71h647M0 120h647M0 170h647M0 219h647M0 268h647" stroke="#4d4d4d" stroke-width="1" fill="none" transform="translate(0.5,0.5)"/><path d="M324 0v306" stroke="#0c0c0c" stroke-width="1" fill="none" transform="translate(0.5,0.5)"/><path d="M0 170h647" stroke="#0c0c0c" stroke-width="1" fill="none" transform="translate(0.5,0.5)"/></svg><svg class="a" style="left:0;top:0" width="648" height="306" viewBox="0 0 648 306"><defs><pattern id="wf" width="2.500" height="2.500" patternUnits="userSpaceOnUse" patternTransform="rotate(12)"><rect width="2.500" height="2.500" fill="#d2d2d2"/><rect x="0" y="0" width="1.200" height="1.200" fill="#444"/></pattern><pattern id="wfm" width="2.4" height="2.4" patternUnits="userSpaceOnUse" patternTransform="rotate(15)"><rect width="2.4" height="2.4" fill="#d2d2d2"/><rect x="0" y="0" width="1.5" height="1.5" fill="#3a3a3a"/></pattern><pattern id="wfd" width="2" height="2" patternUnits="userSpaceOnUse"><rect width="2" height="2" fill="#bdbdbd"/><rect x="0" y="0" width="1.2" height="1.2" fill="#3c3c3c"/></pattern></defs><path d="M51.0 149.0C51.0 145.7 51.8 141.8 53.0 139.0C54.2 136.2 56.2 133.4 58.0 132.0C59.8 130.6 58.4 131.4 64.0 130.5C69.6 129.6 80.9 128.1 91.7 126.5C102.5 124.9 116.6 122.5 129.0 120.9C141.4 119.3 156.7 118.2 166.0 117.0C175.3 115.8 180.3 114.8 185.0 114.0C189.7 113.2 190.9 111.8 194.0 112.0C197.1 112.2 201.2 113.8 203.7 115.0C206.2 116.2 205.9 117.8 209.0 119.0C212.1 120.2 219.0 120.0 222.0 122.0C225.0 124.0 229.8 125.8 227.0 131.0C224.2 136.2 209.5 148.9 205.0 153.0C200.5 157.1 201.8 155.1 200.0 155.4C198.2 155.6 201.2 155.0 194.0 154.5C186.8 154.0 167.8 152.6 157.0 152.6C146.2 152.6 138.3 153.8 129.0 154.5C119.7 155.2 109.4 155.6 101.0 157.0C92.6 158.4 83.3 161.2 78.6 163.0C73.9 164.8 75.1 166.9 73.0 168.0C70.9 169.1 68.5 169.8 66.0 169.5C63.5 169.2 60.2 167.8 58.0 166.0C55.8 164.2 54.2 161.8 53.0 159.0C51.8 156.2 51.0 152.3 51.0 149.0Z" fill="#d2d2d2"/><path d="M431.0 122.7C430.9 117.4 441.3 122.5 444.5 121.0C447.7 119.5 447.6 115.5 450.0 114.0C452.4 112.5 455.6 111.7 459.0 112.0C462.4 112.3 461.8 114.8 470.6 116.0C479.4 117.2 498.6 117.4 511.7 119.0C524.8 120.6 538.1 123.5 549.0 125.5C559.9 127.5 569.8 129.9 577.0 131.0C584.2 132.1 588.5 131.0 592.0 132.0C595.5 133.0 596.6 135.0 598.0 137.0C599.4 139.0 600.3 141.1 600.5 144.0C600.7 146.9 600.4 150.9 599.0 154.5C597.6 158.1 594.2 163.3 592.0 165.7C589.8 168.1 587.9 168.5 586.0 169.0C584.1 169.5 582.9 169.3 580.7 168.5C578.5 167.7 575.2 165.6 573.0 164.0C570.8 162.4 574.9 160.6 567.7 159.0C560.5 157.4 542.5 155.7 530.0 154.5C517.5 153.3 505.4 151.5 493.0 151.7C480.6 151.8 463.7 155.2 455.7 155.4C447.7 155.6 449.1 158.4 445.0 153.0C440.9 147.6 431.1 128.0 431.0 122.7Z" fill="#d2d2d2"/><path d="M198.1 154.4C199.4 150.4 200.9 146.2 205.0 141.0C209.1 135.8 217.9 127.5 222.4 122.9C226.9 118.3 228.7 116.3 232.0 113.5C235.3 110.7 238.1 107.5 242.2 105.8C246.3 104.1 250.9 104.3 256.6 103.1C262.3 101.9 270.7 99.9 276.4 98.6C282.1 97.2 286.0 95.8 290.8 95.0C295.6 94.2 299.5 93.4 305.2 93.6C310.9 93.8 318.4 95.9 325.0 95.9C331.6 95.9 339.1 93.8 344.8 93.6C350.5 93.4 353.5 94.0 359.2 95.0C364.9 96.0 372.7 98.2 379.0 99.5C385.3 100.8 391.9 102.2 397.0 103.1C402.1 104.0 405.8 103.2 409.6 104.9C413.4 106.6 416.7 110.2 420.0 113.0C423.3 115.8 425.2 117.7 429.4 122.0C433.6 126.3 440.8 133.6 445.0 139.0C449.2 144.4 452.9 150.3 454.6 154.4C456.4 158.5 456.4 159.8 455.5 163.4C454.6 167.0 452.9 171.5 449.2 176.0C445.4 180.5 440.2 185.9 433.0 190.4C425.8 194.9 414.4 200.0 406.0 203.0C397.6 206.0 388.6 206.8 382.6 208.4C376.6 210.0 373.6 211.9 370.0 212.5C366.4 213.1 365.5 211.5 361.0 212.0C356.5 212.5 348.7 214.6 343.0 215.6C337.3 216.7 332.8 218.0 326.8 218.3C320.8 218.6 312.1 218.3 307.0 217.4C301.9 216.5 300.2 213.9 296.2 212.9C292.2 211.9 288.1 212.5 283.0 211.5C277.9 210.5 272.1 208.3 265.6 206.6C259.1 204.9 251.5 203.9 244.0 201.2C236.5 198.5 227.2 194.3 220.6 190.4C214.0 186.5 208.3 182.0 204.4 177.8C200.5 173.6 198.2 169.1 197.2 165.2C196.1 161.3 196.8 158.4 198.1 154.4Z" fill="#d2d2d2"/><ellipse cx="63.5" cy="149.5" rx="11.5" ry="19.5" transform="rotate(-9 63.5 149.5)" fill="url(#wf)" opacity="0.8"/><ellipse cx="70.5" cy="147.5" rx="5.2" ry="12.5" transform="rotate(-9 70.5 147.5)" fill="url(#wfd)" opacity="0.95"/><ellipse cx="587.7" cy="149.5" rx="11.5" ry="19.5" transform="rotate(9 587.7 149.5)" fill="url(#wf)" opacity="0.8"/><ellipse cx="580.7" cy="147.5" rx="5.2" ry="12.5" transform="rotate(9 580.7 147.5)" fill="url(#wfd)" opacity="0.95"/><path d="M183.3 148.2h1M98.0 138.1h1M82.5 133.9h1M119.0 141.4h1M207.7 146.7h1M136.2 135.9h1M196.8 126.1h1M89.1 146.9h1M144.1 138.0h1M195.9 116.4h1M102.1 147.1h1M203.0 141.2h1M222.5 135.2h1M140.0 121.5h1M226.1 128.5h1M83.9 141.6h1M105.4 130.8h1M143.9 123.9h1M165.9 118.8h1M210.3 131.3h1M188.8 134.8h1M184.0 146.7h1M113.7 130.4h1M180.8 146.2h1M177.9 127.1h1M178.9 142.8h1M123.3 133.8h1M117.0 133.5h1M144.9 120.9h1M211.8 136.0h1M76.0 140.5h1M110.7 125.5h1M181.8 121.7h1M186.6 126.8h1M183.9 141.1h1M217.1 138.7h1M187.9 136.4h1M187.1 148.8h1M198.7 145.3h1M128.4 131.8h1M150.5 139.6h1M198.3 133.0h1M216.2 142.9h1M200.4 139.6h1M219.8 129.2h1M220.1 134.1h1M76.6 134.6h1M182.2 136.5h1M112.8 136.0h1M219.7 138.1h1M214.1 138.8h1M114.3 143.7h1M181.9 138.7h1M193.5 120.2h1M84.2 129.3h1M163.4 122.2h1M88.1 151.4h1M168.5 135.7h1M207.2 141.5h1M137.4 124.3h1M154.5 141.7h1M201.0 141.5h1M147.5 127.8h1M178.9 135.0h1M228.8 124.9h1M190.5 115.8h1M217.0 142.2h1M193.7 119.1h1M148.0 131.3h1M170.2 143.1h1M186.9 123.3h1M79.8 147.7h1M192.0 147.6h1M227.7 124.6h1M179.2 135.4h1M110.9 145.7h1M181.9 137.0h1M192.8 148.9h1M79.3 135.1h1M84.5 144.6h1M84.8 148.2h1M131.7 143.0h1M85.5 141.4h1M178.3 140.2h1M183.3 127.6h1M188.4 139.3h1M215.3 130.0h1M134.6 134.3h1M199.7 135.0h1M213.1 134.1h1M200.9 143.0h1M86.4 145.9h1M216.0 125.0h1M194.7 127.7h1M179.9 140.0h1M227.2 122.3h1M196.4 130.5h1M78.8 133.2h1M187.0 121.2h1M117.7 141.3h1M202.9 146.3h1M200.4 133.4h1M177.6 131.9h1M98.0 133.2h1M230.9 122.1h1M186.9 131.0h1M209.3 132.3h1M218.8 135.6h1M156.6 139.8h1M185.9 130.8h1M200.1 125.4h1M113.8 141.1h1M87.7 129.9h1M206.1 125.2h1M98.0 135.1h1M203.6 130.1h1M169.8 125.2h1M216.6 132.6h1M172.7 118.7h1M183.8 127.7h1M146.6 144.6h1M205.1 119.7h1M78.1 154.8h1M190.3 142.6h1M75.6 140.9h1M163.6 130.8h1M192.5 143.8h1M209.0 136.6h1M216.9 131.1h1M216.8 137.3h1M84.1 138.7h1M110.5 146.2h1M210.8 126.8h1M191.7 117.2h1M199.0 148.7h1M73.1 137.0h1M124.6 144.3h1M202.7 135.9h1M80.3 151.7h1M215.6 129.7h1M148.1 141.8h1M231.3 123.1h1M81.0 146.7h1M104.2 130.3h1M213.6 128.7h1M157.4 133.3h1M200.7 141.9h1M160.1 141.6h1M230.1 121.8h1M192.3 131.6h1M198.8 122.6h1M186.6 121.1h1M97.1 137.5h1M198.9 125.8h1M227.3 124.5h1M191.4 145.7h1M85.2 153.3h1M176.3 124.8h1M207.0 125.4h1M128.2 134.6h1M210.2 122.5h1M182.9 116.2h1M186.7 120.1h1M217.2 126.9h1M134.1 143.0h1M155.6 128.0h1M110.9 127.5h1M167.7 125.0h1M178.9 125.4h1M186.3 144.8h1M79.5 144.4h1M228.1 126.3h1M219.1 133.0h1M211.1 123.1h1M117.5 132.3h1M148.6 135.8h1M111.1 131.7h1M140.1 134.3h1M184.5 116.1h1M214.8 137.1h1M212.9 122.1h1M228.3 119.9h1M110.3 136.7h1M192.1 122.6h1M124.7 134.1h1M93.0 128.6h1M195.8 145.1h1M211.3 134.5h1M199.6 123.9h1M186.8 141.1h1M179.4 116.5h1M227.3 127.2h1M230.2 125.1h1M91.8 133.4h1M206.4 137.6h1M96.4 128.8h1M221.4 129.1h1M114.3 125.3h1M214.9 125.8h1M201.3 134.7h1M188.3 120.4h1M91.9 135.1h1M192.8 113.8h1M189.9 143.4h1M201.9 127.9h1M124.1 129.8h1M190.9 133.4h1M181.2 120.6h1M185.3 138.4h1M230.3 123.9h1M163.3 139.9h1M182.7 129.7h1M154.9 134.2h1M210.9 134.2h1M186.2 130.6h1M175.3 131.0h1M198.2 143.2h1M199.7 118.5h1M91.7 135.9h1M216.4 126.4h1M188.7 129.5h1M183.5 139.0h1M147.2 122.3h1M129.8 146.5h1M137.9 135.8h1M180.6 128.8h1M144.3 129.7h1M224.8 129.5h1M179.9 120.4h1M215.4 129.4h1M179.4 147.6h1M190.9 137.0h1M93.6 138.5h1M81.6 139.2h1M208.3 124.2h1M138.7 124.0h1M186.3 115.9h1M207.8 121.6h1M114.5 146.0h1M190.6 129.2h1M108.4 132.8h1M150.5 128.8h1M226.6 126.5h1M192.9 122.6h1M181.1 143.7h1M175.1 137.3h1M174.6 142.7h1M192.7 140.1h1M142.5 127.4h1M189.8 143.7h1M178.9 120.1h1M148.1 129.7h1M182.6 119.1h1M191.0 121.1h1M128.1 129.6h1M206.9 133.5h1M183.9 140.2h1M192.7 144.1h1M126.0 145.7h1M107.7 136.8h1M170.0 137.6h1M187.3 140.0h1M113.2 134.9h1M211.9 143.5h1M189.7 146.7h1M196.3 147.7h1M177.5 119.7h1M162.9 144.4h1M83.8 141.9h1M155.9 131.4h1M162.3 125.1h1M221.4 129.6h1M225.6 121.3h1M76.8 150.7h1M182.5 141.2h1M201.4 143.2h1M128.1 140.5h1M180.3 145.4h1M100.9 131.1h1M177.0 124.8h1M212.4 128.8h1M158.9 137.8h1M134.6 140.4h1M197.4 127.9h1M190.9 114.4h1M221.0 132.6h1M223.4 123.4h1M222.3 124.9h1M128.3 128.5h1M102.1 137.3h1M194.2 116.2h1M108.4 131.3h1M153.1 126.7h1M207.5 147.7h1M228.5 127.3h1M136.7 124.4h1M106.6 129.6h1M200.1 131.6h1M102.0 132.1h1M79.6 144.0h1M229.5 118.7h1M188.0 120.0h1M223.6 122.7h1M182.3 132.4h1M133.3 132.7h1M227.2 124.0h1M199.9 133.0h1M206.7 124.6h1M219.2 129.9h1M211.5 139.4h1M172.0 136.3h1M211.9 137.8h1M129.2 125.1h1M199.5 142.6h1M183.4 124.7h1M217.9 138.5h1M196.1 132.7h1M150.6 141.2h1M191.4 134.6h1M84.1 136.4h1M82.1 141.7h1M188.6 137.2h1M185.2 118.8h1M214.3 127.8h1M183.4 129.9h1M93.4 137.6h1M75.7 138.9h1M147.5 144.0h1M208.5 129.1h1M229.4 120.4h1M185.6 130.1h1M212.8 143.9h1M190.8 147.8h1M194.9 121.5h1M191.7 139.0h1M229.9 126.2h1M224.1 128.3h1M139.8 135.0h1M193.7 138.4h1M177.5 145.0h1M221.4 125.0h1M91.7 146.2h1M190.5 138.7h1M209.7 140.4h1M202.2 149.8h1M171.5 143.7h1M185.3 145.1h1M88.1 135.6h1M210.1 121.1h1M183.8 138.1h1M183.6 125.2h1M214.9 128.5h1M205.8 148.7h1M75.1 138.9h1M174.7 131.3h1M194.2 119.6h1M180.2 134.1h1M173.4 121.9h1M177.4 141.4h1M161.8 134.1h1M82.1 148.4h1M77.8 140.6h1M227.0 122.1h1M83.5 133.7h1M151.5 130.9h1M80.8 154.0h1M218.4 129.9h1M78.3 140.3h1M187.9 119.7h1M98.8 127.0h1M212.4 122.2h1M218.7 123.8h1M118.6 125.6h1M99.7 137.9h1M132.7 134.6h1M148.4 134.5h1M185.6 146.3h1M79.5 135.6h1M162.7 138.2h1M169.5 128.4h1M183.3 122.2h1M73.2 130.4h1M226.7 126.8h1M98.8 135.2h1M226.9 120.1h1M132.2 136.6h1M77.1 130.3h1M98.7 138.0h1M204.0 138.9h1M228.0 127.9h1M82.3 143.2h1M199.0 132.8h1M200.8 132.3h1M97.0 135.7h1M106.9 145.9h1M149.8 122.5h1M169.2 142.8h1M126.3 140.9h1M90.4 142.8h1M198.7 136.2h1M218.8 132.3h1M123.5 140.3h1M193.7 138.6h1M188.7 117.7h1M169.3 135.7h1M133.2 124.3h1M193.7 126.1h1M200.6 119.5h1M168.9 128.6h1M211.0 142.9h1M88.5 137.0h1M204.2 118.2h1M200.8 118.6h1M213.5 140.2h1M90.0 131.7h1M205.8 144.1h1M228.3 127.3h1M106.2 128.5h1M186.1 120.0h1M130.1 123.3h1M206.2 129.7h1M122.5 136.4h1M206.4 121.5h1M198.7 125.9h1M199.2 147.7h1M222.1 136.2h1M181.2 144.8h1M154.1 125.5h1M203.3 140.9h1M83.0 138.0h1M81.2 135.5h1M91.3 138.2h1M156.6 121.0h1M197.9 126.7h1M192.4 143.7h1M180.2 135.3h1M209.4 138.1h1M74.1 148.7h1M116.7 140.2h1M189.3 132.9h1M126.8 143.8h1M221.6 128.5h1M76.1 134.3h1M79.6 134.4h1M114.9 147.3h1M195.0 132.6h1M178.3 121.1h1M227.4 121.1h1M163.1 136.8h1M79.9 147.0h1M183.3 117.8h1M200.6 131.2h1M181.2 115.9h1M126.9 137.7h1M136.1 128.2h1M182.8 128.9h1M109.0 131.1h1M215.4 133.5h1M190.8 140.6h1M196.3 136.5h1M169.1 143.8h1M85.0 152.0h1M156.8 138.7h1M203.1 117.0h1M184.3 146.9h1M180.8 139.3h1M131.3 121.9h1M82.9 129.8h1M224.9 123.2h1M108.2 125.6h1M157.7 119.5h1M111.9 147.6h1M159.0 127.1h1M217.7 126.5h1M129.2 129.6h1M201.5 124.0h1M108.5 135.4h1M139.2 123.2h1M213.1 125.4h1M106.2 127.7h1M94.8 140.4h1M204.4 121.5h1M151.1 141.3h1M201.1 117.4h1M194.5 123.9h1M208.7 121.6h1M198.5 119.8h1M145.9 122.5h1M161.0 124.6h1M206.5 138.1h1M80.6 138.9h1M75.5 150.4h1M211.5 136.3h1M91.0 141.5h1M111.5 142.5h1M187.5 127.4h1M180.8 123.8h1M103.8 137.0h1M182.5 135.4h1M187.4 148.9h1M86.8 141.9h1M197.5 136.0h1M179.1 138.5h1M184.9 131.7h1M129.9 143.5h1M231.5 126.0h1M199.0 148.9h1M75.5 150.8h1M116.8 127.2h1M76.2 130.1h1M180.0 132.0h1M182.3 135.4h1M101.2 140.4h1M89.4 129.5h1M159.3 124.5h1M195.0 138.2h1M197.9 118.1h1M195.2 118.1h1M182.4 127.6h1M154.4 137.2h1M160.6 130.2h1M190.5 118.2h1M108.2 125.6h1M131.5 139.2h1M178.4 118.5h1M195.0 142.6h1M102.4 129.5h1M213.8 132.2h1M74.7 141.3h1M224.2 133.0h1M117.4 144.7h1M83.9 152.0h1M205.6 120.6h1M202.9 120.8h1M113.8 137.2h1M187.9 120.8h1M181.0 131.5h1M91.8 139.2h1M190.3 135.6h1M177.7 127.8h1M207.4 139.8h1M130.5 130.6h1M167.3 126.4h1M173.5 134.4h1M222.6 126.4h1M188.0 138.1h1M87.7 131.6h1M121.3 129.0h1M91.2 139.3h1M193.5 139.8h1M85.6 139.5h1M132.5 141.5h1M158.8 120.3h1M148.9 135.2h1M79.7 131.5h1M194.3 141.7h1M135.4 122.4h1M212.7 134.9h1M181.4 136.3h1M81.8 146.2h1M138.5 125.0h1M199.3 136.8h1M146.1 125.8h1M102.6 126.7h1M190.7 140.0h1M189.5 128.8h1M109.6 144.4h1M74.6 137.3h1M225.1 122.2h1M115.6 144.1h1M163.0 137.1h1M193.7 130.1h1M198.3 124.3h1M128.0 135.9h1M193.8 129.2h1M198.0 131.0h1M105.5 135.0h1M81.0 143.4h1M108.5 135.4h1M180.2 124.6h1M191.6 140.1h1M200.1 150.1h1M199.0 137.1h1M93.4 129.0h1M124.0 124.8h1M211.6 147.1h1M175.9 142.2h1M85.6 130.1h1M100.2 127.7h1M224.7 130.5h1M92.1 149.7h1M128.6 138.4h1M203.2 128.0h1M84.1 140.2h1M184.7 130.6h1M172.8 142.0h1M225.9 121.8h1M209.0 137.6h1M110.9 125.7h1M165.4 141.0h1M225.5 132.9h1M172.2 126.4h1M83.7 129.1h1M213.8 129.9h1M128.9 131.2h1M201.6 140.8h1M174.1 121.5h1M181.1 138.9h1M227.8 125.8h1M231.7 117.4h1M219.9 129.4h1M219.9 137.4h1M192.7 146.2h1M188.4 120.5h1M124.3 124.3h1M222.5 123.5h1M96.7 136.7h1M198.4 116.4h1M188.2 125.5h1M100.1 140.6h1M219.1 131.7h1M129.5 143.6h1M155.7 138.2h1M186.9 119.2h1M157.3 125.1h1M206.0 132.9h1M126.8 135.5h1M79.4 134.9h1M94.1 133.6h1M75.8 137.4h1M141.2 128.3h1M190.1 148.3h1M170.4 122.0h1M205.8 123.4h1M203.0 125.0h1M195.8 129.2h1M164.9 126.9h1M159.6 139.3h1M213.4 145.0h1M187.5 125.5h1M223.3 129.0h1M185.2 145.8h1M202.2 140.1h1M190.2 131.4h1M98.0 142.1h1M217.1 125.4h1M199.3 130.3h1M186.6 127.1h1M172.0 124.6h1M146.7 132.6h1M210.6 137.9h1M109.9 126.2h1M195.7 144.4h1M127.5 129.2h1M217.9 125.0h1M200.1 143.5h1M183.4 132.7h1M78.1 131.9h1M107.7 127.4h1M218.3 125.0h1M212.8 137.6h1M207.3 147.5h1M184.6 147.0h1M163.9 128.9h1M193.2 144.9h1M211.7 142.7h1M98.0 142.6h1M202.7 141.8h1M99.1 141.1h1M172.1 141.9h1M223.4 130.8h1M78.7 134.3h1M202.8 128.8h1M209.5 130.6h1M103.7 131.1h1M184.1 132.4h1M173.2 131.6h1M196.1 123.1h1M153.0 127.7h1M99.4 141.6h1M180.8 132.4h1M210.3 121.1h1M192.2 146.8h1M108.9 136.7h1M205.5 143.3h1M205.4 139.3h1M194.1 137.0h1M108.6 138.8h1M128.1 136.1h1M90.9 137.6h1M181.3 125.5h1M227.4 121.4h1M127.6 144.6h1M77.7 155.0h1M131.8 127.0h1M190.7 147.5h1M169.9 127.9h1M222.4 128.3h1M178.9 132.5h1M211.2 139.7h1M206.2 142.0h1M155.1 141.8h1M177.6 124.2h1M229.2 120.5h1M155.4 134.4h1M75.7 135.1h1M198.7 137.3h1M182.6 134.6h1M222.9 126.1h1M212.7 136.5h1M213.1 131.4h1M195.3 124.5h1M114.9 131.7h1M188.1 116.0h1M182.5 127.8h1M207.5 136.3h1M212.0 145.3h1M177.6 116.7h1M193.1 146.8h1M199.7 141.0h1M176.8 130.1h1M158.2 127.8h1M194.4 122.3h1M189.2 147.1h1M138.0 136.3h1M204.3 131.4h1M107.7 144.8h1M190.5 124.8h1M177.1 126.0h1M133.7 122.2h1M107.1 134.2h1M75.6 146.7h1M218.4 128.6h1M202.3 140.6h1M231.7 125.7h1M210.7 140.0h1M150.0 131.9h1M192.7 143.6h1M184.1 120.6h1M218.3 124.2h1M207.1 131.2h1M108.8 135.1h1M165.4 126.4h1M205.0 123.0h1M129.8 137.3h1M142.4 126.5h1M113.3 138.7h1M163.8 125.6h1M125.3 130.6h1M84.0 152.4h1M150.2 137.9h1M182.8 130.8h1M153.4 120.1h1M86.5 131.8h1M120.1 143.6h1M197.7 115.8h1M200.2 145.0h1M142.3 138.5h1M219.5 135.2h1M196.7 118.2h1M165.6 126.5h1M152.6 125.1h1M97.5 129.4h1M163.6 121.5h1M178.9 118.5h1M209.3 130.6h1M205.3 136.0h1M159.8 137.5h1M76.7 150.7h1M207.7 143.8h1M152.5 144.0h1M193.9 119.5h1M209.8 139.1h1M112.6 127.9h1M209.1 132.4h1M89.8 138.2h1M155.9 135.0h1M177.4 149.0h1M187.3 129.9h1M76.9 149.3h1M157.7 132.3h1M183.0 116.8h1M198.2 144.9h1M194.3 143.7h1M148.6 144.8h1M106.7 141.0h1M76.2 134.4h1M180.3 126.4h1M130.2 146.7h1M83.2 142.7h1M106.3 128.4h1M197.7 141.9h1M173.0 119.5h1M81.0 145.9h1M214.3 136.9h1M187.5 120.8h1M198.1 120.2h1M129.6 126.1h1M201.2 135.0h1M115.8 125.2h1M144.9 145.1h1M79.9 140.4h1M83.6 134.5h1M90.2 128.9h1M467.9 148.2h1M553.2 138.1h1M568.7 133.9h1M532.2 141.4h1M443.5 146.7h1M515.0 135.9h1M454.4 126.1h1M562.1 146.9h1M507.1 138.0h1M455.3 116.4h1M549.1 147.1h1M448.2 141.2h1M428.7 135.2h1M511.2 121.5h1M425.1 128.5h1M567.3 141.6h1M545.8 130.8h1M507.3 123.9h1M485.3 118.8h1M440.9 131.3h1M462.4 134.8h1M467.2 146.7h1M537.5 130.4h1M470.4 146.2h1M473.3 127.1h1M472.3 142.8h1M527.9 133.8h1M534.2 133.5h1M506.3 120.9h1M439.4 136.0h1M575.2 140.5h1M540.5 125.5h1M469.4 121.7h1M464.6 126.8h1M467.3 141.1h1M434.1 138.7h1M463.3 136.4h1M464.1 148.8h1M452.5 145.3h1M522.8 131.8h1M500.7 139.6h1M452.9 133.0h1M435.0 142.9h1M450.8 139.6h1M431.4 129.2h1M431.1 134.1h1M574.6 134.6h1M469.0 136.5h1M538.4 136.0h1M431.5 138.1h1M437.1 138.8h1M536.9 143.7h1M469.3 138.7h1M457.7 120.2h1M567.0 129.3h1M487.8 122.2h1M563.1 151.4h1M482.7 135.7h1M444.0 141.5h1M513.8 124.3h1M496.7 141.7h1M450.2 141.5h1M503.7 127.8h1M472.3 135.0h1M422.4 124.9h1M460.7 115.8h1M434.2 142.2h1M457.5 119.1h1M503.2 131.3h1M481.0 143.1h1M464.3 123.3h1M571.4 147.7h1M459.2 147.6h1M423.5 124.6h1M472.0 135.4h1M540.3 145.7h1M469.3 137.0h1M458.4 148.9h1M571.9 135.1h1M566.7 144.6h1M566.4 148.2h1M519.5 143.0h1M565.7 141.4h1M472.9 140.2h1M467.9 127.6h1M462.8 139.3h1M435.9 130.0h1M516.6 134.3h1M451.5 135.0h1M438.1 134.1h1M450.3 143.0h1M564.8 145.9h1M435.2 125.0h1M456.5 127.7h1M471.3 140.0h1M424.0 122.3h1M454.8 130.5h1M572.4 133.2h1M464.2 121.2h1M533.5 141.3h1M448.3 146.3h1M450.8 133.4h1M473.6 131.9h1M553.2 133.2h1M420.3 122.1h1M464.3 131.0h1M441.9 132.3h1M432.4 135.6h1M494.6 139.8h1M465.3 130.8h1M451.1 125.4h1M537.4 141.1h1M563.5 129.9h1M445.1 125.2h1M553.2 135.1h1M447.6 130.1h1M481.4 125.2h1M434.6 132.6h1M478.5 118.7h1M467.4 127.7h1M504.6 144.6h1M446.1 119.7h1M573.1 154.8h1M460.9 142.6h1M575.6 140.9h1M487.6 130.8h1M458.7 143.8h1M442.2 136.6h1M434.3 131.1h1M434.4 137.3h1M567.1 138.7h1M540.7 146.2h1M440.4 126.8h1M459.5 117.2h1M452.2 148.7h1M578.1 137.0h1M526.6 144.3h1M448.5 135.9h1M570.9 151.7h1M435.6 129.7h1M503.1 141.8h1M419.9 123.1h1M570.2 146.7h1M547.0 130.3h1M437.6 128.7h1M493.8 133.3h1M450.5 141.9h1M491.1 141.6h1M421.1 121.8h1M458.9 131.6h1M452.4 122.6h1M464.6 121.1h1M554.1 137.5h1M452.3 125.8h1M423.9 124.5h1M459.8 145.7h1M566.0 153.3h1M474.9 124.8h1M444.2 125.4h1M523.0 134.6h1M441.0 122.5h1M468.3 116.2h1M464.5 120.1h1M434.0 126.9h1M517.1 143.0h1M495.6 128.0h1M540.3 127.5h1M483.5 125.0h1M472.3 125.4h1M464.9 144.8h1M571.7 144.4h1M423.1 126.3h1M432.1 133.0h1M440.1 123.1h1M533.7 132.3h1M502.6 135.8h1M540.1 131.7h1M511.1 134.3h1M466.7 116.1h1M436.4 137.1h1M438.3 122.1h1M422.9 119.9h1M540.9 136.7h1M459.1 122.6h1M526.5 134.1h1M558.2 128.6h1M455.4 145.1h1M439.9 134.5h1M451.6 123.9h1M464.4 141.1h1M471.8 116.5h1M423.9 127.2h1M421.0 125.1h1M559.4 133.4h1M444.8 137.6h1M554.8 128.8h1M429.8 129.1h1M536.9 125.3h1M436.3 125.8h1M449.9 134.7h1M462.9 120.4h1M559.3 135.1h1M458.4 113.8h1M461.3 143.4h1M449.3 127.9h1M527.1 129.8h1M460.3 133.4h1M470.0 120.6h1M465.9 138.4h1M420.9 123.9h1M487.9 139.9h1M468.5 129.7h1M496.3 134.2h1M440.3 134.2h1M465.0 130.6h1M475.9 131.0h1M453.0 143.2h1M451.5 118.5h1M559.5 135.9h1M434.8 126.4h1M462.5 129.5h1M467.7 139.0h1M504.0 122.3h1M521.4 146.5h1M513.3 135.8h1M470.6 128.8h1M506.9 129.7h1M426.4 129.5h1M471.3 120.4h1M435.8 129.4h1M471.8 147.6h1M460.3 137.0h1M557.6 138.5h1M569.6 139.2h1M442.9 124.2h1M512.5 124.0h1M464.9 115.9h1M443.4 121.6h1M536.7 146.0h1M460.6 129.2h1M542.8 132.8h1M500.7 128.8h1M424.6 126.5h1M458.3 122.6h1M470.1 143.7h1M476.1 137.3h1M476.6 142.7h1M458.5 140.1h1M508.7 127.4h1M461.4 143.7h1M472.3 120.1h1M503.1 129.7h1M468.6 119.1h1M460.2 121.1h1M523.1 129.6h1M444.3 133.5h1M467.3 140.2h1M458.5 144.1h1M525.2 145.7h1M543.5 136.8h1M481.2 137.6h1M463.9 140.0h1M538.0 134.9h1M439.3 143.5h1M461.5 146.7h1M454.9 147.7h1M473.7 119.7h1M488.3 144.4h1M567.4 141.9h1M495.3 131.4h1M488.9 125.1h1M429.8 129.6h1M425.6 121.3h1M574.4 150.7h1M468.7 141.2h1M449.8 143.2h1M523.1 140.5h1M470.9 145.4h1M550.3 131.1h1M474.2 124.8h1M438.8 128.8h1M492.3 137.8h1M516.6 140.4h1M453.8 127.9h1M460.3 114.4h1M430.2 132.6h1M427.8 123.4h1M428.9 124.9h1M522.9 128.5h1M549.1 137.3h1M457.0 116.2h1M542.8 131.3h1M498.1 126.7h1M443.7 147.7h1M422.7 127.3h1M514.5 124.4h1M544.6 129.6h1M451.1 131.6h1M549.2 132.1h1M571.6 144.0h1M421.7 118.7h1M463.2 120.0h1M427.6 122.7h1M468.9 132.4h1M517.9 132.7h1M424.0 124.0h1M451.3 133.0h1M444.5 124.6h1M432.0 129.9h1M439.7 139.4h1M479.2 136.3h1M439.3 137.8h1M522.0 125.1h1M451.7 142.6h1M467.8 124.7h1M433.3 138.5h1M455.1 132.7h1M500.6 141.2h1M459.8 134.6h1M567.1 136.4h1M569.1 141.7h1M462.6 137.2h1M466.0 118.8h1M436.9 127.8h1M467.8 129.9h1M557.8 137.6h1M575.5 138.9h1M503.7 144.0h1M442.7 129.1h1M421.8 120.4h1M465.6 130.1h1M438.4 143.9h1M460.4 147.8h1M456.3 121.5h1M459.5 139.0h1M421.3 126.2h1M427.1 128.3h1M511.4 135.0h1M457.5 138.4h1M473.7 145.0h1M429.8 125.0h1M559.5 146.2h1M460.7 138.7h1M441.5 140.4h1M449.0 149.8h1M479.7 143.7h1M465.9 145.1h1M563.1 135.6h1M441.1 121.1h1M467.4 138.1h1M467.6 125.2h1M436.3 128.5h1M445.4 148.7h1M576.1 138.9h1M476.5 131.3h1M457.0 119.6h1M471.0 134.1h1M477.8 121.9h1M473.8 141.4h1M489.4 134.1h1M569.1 148.4h1M573.4 140.6h1M424.2 122.1h1M567.7 133.7h1M499.7 130.9h1M570.4 154.0h1M432.8 129.9h1M572.9 140.3h1M463.3 119.7h1M552.4 127.0h1M438.8 122.2h1M432.5 123.8h1M532.6 125.6h1M551.5 137.9h1M518.5 134.6h1M502.8 134.5h1M465.6 146.3h1M571.7 135.6h1M488.5 138.2h1M481.7 128.4h1M467.9 122.2h1M578.0 130.4h1M424.5 126.8h1M552.4 135.2h1M424.3 120.1h1M519.0 136.6h1M574.1 130.3h1M552.5 138.0h1M447.2 138.9h1M423.2 127.9h1M568.9 143.2h1M452.2 132.8h1M450.4 132.3h1M554.2 135.7h1M544.3 145.9h1M501.4 122.5h1M482.0 142.8h1M524.9 140.9h1M560.8 142.8h1M452.5 136.2h1M432.4 132.3h1M527.7 140.3h1M457.5 138.6h1M462.5 117.7h1M481.9 135.7h1M518.0 124.3h1M457.5 126.1h1M450.6 119.5h1M482.3 128.6h1M440.2 142.9h1M562.7 137.0h1M447.0 118.2h1M450.4 118.6h1M437.7 140.2h1M561.2 131.7h1M445.4 144.1h1M422.9 127.3h1M545.0 128.5h1M465.1 120.0h1M521.1 123.3h1M445.0 129.7h1M528.7 136.4h1M444.8 121.5h1M452.5 125.9h1M452.0 147.7h1M429.1 136.2h1M470.0 144.8h1M497.1 125.5h1M447.9 140.9h1M568.2 138.0h1M570.0 135.5h1M559.9 138.2h1M494.6 121.0h1M453.3 126.7h1M458.8 143.7h1M471.0 135.3h1M441.8 138.1h1M577.1 148.7h1M534.5 140.2h1M461.9 132.9h1M524.4 143.8h1M429.6 128.5h1M575.1 134.3h1M571.6 134.4h1M536.3 147.3h1M456.2 132.6h1M472.9 121.1h1M423.8 121.1h1M488.1 136.8h1M571.3 147.0h1M467.9 117.8h1M450.6 131.2h1M470.0 115.9h1M524.3 137.7h1M515.1 128.2h1M468.4 128.9h1M542.2 131.1h1M435.8 133.5h1M460.4 140.6h1M454.9 136.5h1M482.1 143.8h1M566.2 152.0h1M494.4 138.7h1M448.1 117.0h1M466.9 146.9h1M470.4 139.3h1M519.9 121.9h1M568.3 129.8h1M426.3 123.2h1M543.0 125.6h1M493.5 119.5h1M539.3 147.6h1M492.2 127.1h1M433.5 126.5h1M522.0 129.6h1M449.7 124.0h1M542.7 135.4h1M512.0 123.2h1M438.1 125.4h1M545.0 127.7h1M556.4 140.4h1M446.8 121.5h1M500.1 141.3h1M450.1 117.4h1M456.7 123.9h1M442.5 121.6h1M452.7 119.8h1M505.3 122.5h1M490.2 124.6h1M444.7 138.1h1M570.6 138.9h1M575.7 150.4h1M439.7 136.3h1M560.2 141.5h1M539.7 142.5h1M463.7 127.4h1M470.4 123.8h1M547.4 137.0h1M468.7 135.4h1M463.8 148.9h1M564.4 141.9h1M453.7 136.0h1M472.1 138.5h1M466.3 131.7h1M521.3 143.5h1M419.7 126.0h1M452.2 148.9h1M575.7 150.8h1M534.4 127.2h1M575.0 130.1h1M471.2 132.0h1M468.9 135.4h1M550.0 140.4h1M561.8 129.5h1M491.9 124.5h1M456.2 138.2h1M453.3 118.1h1M456.0 118.1h1M468.8 127.6h1M496.8 137.2h1M490.6 130.2h1M460.7 118.2h1M543.0 125.6h1M519.7 139.2h1M472.8 118.5h1M456.2 142.6h1M548.8 129.5h1M437.4 132.2h1M576.5 141.3h1M427.0 133.0h1M533.8 144.7h1M567.3 152.0h1M445.6 120.6h1M448.3 120.8h1M537.4 137.2h1M463.3 120.8h1M470.2 131.5h1M559.4 139.2h1M460.9 135.6h1M473.5 127.8h1M443.8 139.8h1M520.7 130.6h1M483.9 126.4h1M477.7 134.4h1M428.6 126.4h1M463.2 138.1h1M563.5 131.6h1M529.9 129.0h1M560.0 139.3h1M457.7 139.8h1M565.6 139.5h1M518.7 141.5h1M492.4 120.3h1M502.3 135.2h1M571.5 131.5h1M456.9 141.7h1M515.8 122.4h1M438.5 134.9h1M469.8 136.3h1M569.4 146.2h1M512.7 125.0h1M451.9 136.8h1M505.1 125.8h1M548.6 126.7h1M460.5 140.0h1M461.7 128.8h1M541.6 144.4h1M576.6 137.3h1M426.1 122.2h1M535.6 144.1h1M488.2 137.1h1M457.5 130.1h1M452.9 124.3h1M523.2 135.9h1M457.4 129.2h1M453.2 131.0h1M545.7 135.0h1M570.2 143.4h1M542.7 135.4h1M471.0 124.6h1M459.6 140.1h1M451.1 150.1h1M452.2 137.1h1M557.8 129.0h1M527.2 124.8h1M439.6 147.1h1M475.3 142.2h1M565.6 130.1h1M551.0 127.7h1M426.5 130.5h1M559.1 149.7h1M522.6 138.4h1M448.0 128.0h1M567.1 140.2h1M466.5 130.6h1M478.4 142.0h1M425.3 121.8h1M442.2 137.6h1M540.3 125.7h1M485.8 141.0h1M425.7 132.9h1M479.0 126.4h1M567.5 129.1h1M437.4 129.9h1M522.3 131.2h1M449.6 140.8h1M477.1 121.5h1M470.1 138.9h1M423.4 125.8h1M419.5 117.4h1M431.3 129.4h1M431.3 137.4h1M458.5 146.2h1M462.8 120.5h1M526.9 124.3h1M428.7 123.5h1M554.5 136.7h1M452.8 116.4h1M463.0 125.5h1M551.1 140.6h1M432.1 131.7h1M521.7 143.6h1M495.5 138.2h1M464.3 119.2h1M493.9 125.1h1M445.2 132.9h1M524.4 135.5h1M571.8 134.9h1M557.1 133.6h1M575.4 137.4h1M510.0 128.3h1M461.1 148.3h1M480.8 122.0h1M445.4 123.4h1M448.2 125.0h1M455.4 129.2h1M486.3 126.9h1M491.6 139.3h1M437.8 145.0h1M463.7 125.5h1M427.9 129.0h1M466.0 145.8h1M449.0 140.1h1M461.0 131.4h1M553.2 142.1h1M434.1 125.4h1M451.9 130.3h1M464.6 127.1h1M479.2 124.6h1M504.5 132.6h1M440.6 137.9h1M541.3 126.2h1M455.5 144.4h1M523.7 129.2h1M433.3 125.0h1M451.1 143.5h1M467.8 132.7h1M573.1 131.9h1M543.5 127.4h1M432.9 125.0h1M438.4 137.6h1M443.9 147.5h1M466.6 147.0h1M487.3 128.9h1M458.0 144.9h1M439.5 142.7h1M553.2 142.6h1M448.5 141.8h1M552.1 141.1h1M479.1 141.9h1M427.8 130.8h1M572.5 134.3h1M448.4 128.8h1M441.7 130.6h1M547.5 131.1h1M467.1 132.4h1M478.0 131.6h1M455.1 123.1h1M498.2 127.7h1M551.8 141.6h1M470.4 132.4h1M440.9 121.1h1M459.0 146.8h1M542.3 136.7h1M445.7 143.3h1M445.8 139.3h1M457.1 137.0h1M542.6 138.8h1M523.1 136.1h1M560.3 137.6h1M469.9 125.5h1M423.8 121.4h1M523.6 144.6h1M573.5 155.0h1M519.4 127.0h1M460.5 147.5h1M481.3 127.9h1M428.8 128.3h1M472.3 132.5h1M440.0 139.7h1M445.0 142.0h1M496.1 141.8h1M473.6 124.2h1M422.0 120.5h1M495.8 134.4h1M575.5 135.1h1M452.5 137.3h1M468.6 134.6h1M428.3 126.1h1M438.5 136.5h1M438.1 131.4h1M455.9 124.5h1M536.3 131.7h1M463.1 116.0h1M468.7 127.8h1M443.7 136.3h1M439.2 145.3h1M473.6 116.7h1M458.1 146.8h1M451.5 141.0h1M474.4 130.1h1M493.0 127.8h1M456.8 122.3h1M462.0 147.1h1M513.2 136.3h1M446.9 131.4h1M543.5 144.8h1M460.7 124.8h1M474.1 126.0h1M517.5 122.2h1M544.1 134.2h1M575.6 146.7h1M432.8 128.6h1M448.9 140.6h1M419.5 125.7h1M440.5 140.0h1M501.2 131.9h1M458.5 143.6h1M467.1 120.6h1M432.9 124.2h1M444.1 131.2h1M542.4 135.1h1M485.8 126.4h1M446.2 123.0h1M521.4 137.3h1M508.8 126.5h1M537.9 138.7h1M487.4 125.6h1M525.9 130.6h1M567.2 152.4h1M501.0 137.9h1M468.4 130.8h1M497.8 120.1h1M564.7 131.8h1M531.1 143.6h1M453.5 115.8h1M451.0 145.0h1M508.9 138.5h1M431.7 135.2h1M454.5 118.2h1M485.6 126.5h1M498.6 125.1h1M553.7 129.4h1M487.6 121.5h1M472.3 118.5h1M441.9 130.6h1M445.9 136.0h1M491.4 137.5h1M574.5 150.7h1M443.5 143.8h1M498.7 144.0h1M457.3 119.5h1M441.4 139.1h1M538.6 127.9h1M442.1 132.4h1M561.4 138.2h1M495.3 135.0h1M473.8 149.0h1M463.9 129.9h1M574.3 149.3h1M493.5 132.3h1M468.2 116.8h1M453.0 144.9h1M456.9 143.7h1M502.6 144.8h1M544.5 141.0h1M575.0 134.4h1M470.9 126.4h1M521.0 146.7h1M568.0 142.7h1M544.9 128.4h1M453.5 141.9h1M478.2 119.5h1M570.2 145.9h1M436.9 136.9h1M463.7 120.8h1M453.1 120.2h1M521.6 126.1h1M450.0 135.0h1M535.4 125.2h1M506.3 145.1h1M571.3 140.4h1M567.6 134.5h1M561.0 128.9h1" stroke="#4c4c4c" stroke-width="1" fill="none" opacity=".9"/><g transform="translate(-35,-109)"><path d="M340.2 236.400L357.3 236.400L356.8 253L352 251z" fill="url(#wfm)"/><path d="M364.5 237.300L380.7 236.400L367.5 254.400L365 250z" fill="url(#wfm)"/><path d="M359.1 288.600L376.2 304.800L345.6 304.800z" fill="url(#wfm)"/><path d="M393.3 247.200c5 5 6.5 11 6.3 18c-4.5 -5 -6.3 -11 -6.3 -18z" fill="#3a3a3a"/><path d="M341.1 257.100C336 270 322 281 306 286" stroke="url(#wfm)" stroke-width="4.5" fill="none" opacity=".75"/><path d="M381.6 259.800C386 271 399 280 413.1 284.1" stroke="url(#wfm)" stroke-width="4.5" fill="none" opacity=".75"/><path d="M258 230l12 -11 3 2.5 -10 11z" fill="url(#wfm)" opacity=".7"/><path d="M447 219l12 11 -4 2 -11 -10.500z" fill="url(#wfm)" opacity=".7"/><path d="M342 319.500h6M352 320h3M364 319.500h7" stroke="#555" stroke-width="1.2"/></g><g stroke="#d2d2d2" stroke-width="2.2" stroke-linecap="round" transform="translate(-35,-109)"><path d="M310 318l13 6"/><path d="M402 325l14 -6.500"/></g></svg><div class="t" style="left:2.6px;top:7.5px;font-size:9px;color:#e0e0e0;">[ + ] [Top ] [Standard ] [Wireframe ]</div><svg class="a" style="left:0;top:0" width="120" height="310" viewBox="0 0 120 310"><g transform="translate(-35,-109)" font-family="Liberation Sans,sans-serif" font-size="6.5"><path d="M55 395.800V376" stroke="#2ea43a" stroke-width="1.8"/><path d="M55 394.800H79.5" stroke="#cc2a2e" stroke-width="1.4"/><rect x="56" y="391.8" width="2.3" height="3.6" fill="#2b30d8"/><text x="53" y="375" fill="#2ea43a">y</text><text x="78" y="392.5" fill="#cc2a2e" font-size="5.5">x</text></g></svg><svg class="a" style="left:0;top:0" width="648" height="308" viewBox="0 0 648 308"><g transform="translate(-35,-109)"><circle cx="637.9" cy="152.8" r="22.6" fill="none" stroke="#7d8086" stroke-width="5.4"/><circle cx="637.9" cy="152.8" r="18.8" fill="none" stroke="#2c2c2c" stroke-width="2.2"/><rect x="625.9" y="140.7" width="24.1" height="24.2" fill="#9b9b9b"/><text x="637.9" y="154.8" text-anchor="middle" font-family="Liberation Sans,sans-serif" font-size="5" font-weight="bold" fill="#787878">TOP</text><text x="637.9" y="130.3" text-anchor="middle" font-family="Liberation Sans,sans-serif" font-size="8" font-weight="bold" fill="#c4c4c4">N</text><text x="637.9" y="181.6" text-anchor="middle" font-family="Liberation Sans,sans-serif" font-size="8" font-weight="bold" fill="#c4c4c4">S</text><text x="612.5" y="155.8" text-anchor="middle" font-family="Liberation Sans,sans-serif" font-size="8" font-weight="bold" fill="#c4c4c4">W</text><text x="663.7" y="155.8" text-anchor="middle" font-family="Liberation Sans,sans-serif" font-size="8" font-weight="bold" fill="#c4c4c4">E</text></g></svg></div>
<div class="vp" style="left:687px;top:109px;width:646px;height:306px"><svg class="a" style="left:0;top:0" width="646" height="306" viewBox="0 0 646 306" shape-rendering="crispEdges"><path d="M5 0v306M23 0v306M42 0v306M61 0v306M79 0v306M98 0v306M117 0v306M136 0v306M154 0v306M173 0v306M192 0v306M210 0v306M229 0v306M248 0v306M267 0v306M285 0v306M304 0v306M323 0v306M341 0v306M360 0v306M379 0v306M398 0v306M416 0v306M435 0v306M454 0v306M472 0v306M491 0v306M510 0v306M529 0v306M547 0v306M566 0v306M585 0v306M603 0v306M622 0v306M641 0v306M0 6h646M0 24h646M0 43h646M0 62h646M0 80h646M0 99h646M0 118h646M0 137h646M0 155h646M0 174h646M0 193h646M0 211h646M0 230h646M0 249h646M0 268h646M0 286h646M0 305h646" stroke="#606060" stroke-width="1" fill="none" transform="translate(0.5,0.5)"/><path d="M323 0v306" stroke="#0c0c0c" stroke-width="1" fill="none" transform="translate(0.5,0.5)"/></svg><svg class="a" style="left:0;top:0" width="646" height="306" viewBox="0 0 646 306"><polygon points="281.5,41.8 288.8,33.2 297.4,27.2 309.4,22.9 314.5,24.6 333.4,24.6 337.7,23.7 348.9,28.9 357.5,33.2 365.2,42.6 362.7,54.7 361.8,69.3 362.5,73.0 366.1,71.8 379.4,65.6 392.0,80.1 407.4,95.5 428.1,121.6 418.1,127.2 399.7,107.7 379.8,89.3 367.5,76.3 360.1,77.0 359.6,86.0 360.0,131.0 363.0,170.3 366.9,209.5 370.8,248.8 371.8,258.6 350.2,268.4 347.2,283.4 335.5,283.4 330.6,254.7 314.8,254.7 309.9,283.4 299.1,282.4 295.2,268.4 274.4,258.6 277.5,219.4 282.5,170.3 287.4,131.0 287.0,86.0 286.2,76.0 278.5,76.3 264.7,90.9 244.8,107.7 228.0,126.4 218.0,120.8 238.7,97.0 254.0,80.1 266.3,65.6 280.2,71.0 283.6,72.0 283.2,54.7" fill="#d2d2d2" stroke="#d2d2d2" stroke-width="0.8" stroke-linejoin="round"/><path d="M308.3 46.8h1M310.4 46.0h1M310.7 39.3h1M307.1 51.2h1M306.8 44.0h1M317.8 39.2h1M315.8 40.7h1M311.3 39.9h1M315.4 45.8h1M313.2 45.8h1M311.2 38.9h1M315.4 42.4h1M306.2 42.0h1M316.1 40.4h1M316.5 45.1h1M316.7 45.5h1M311.8 47.4h1M313.3 48.1h1M314.2 37.2h1M305.1 45.0h1M317.2 39.2h1M312.0 41.2h1M310.9 43.0h1M310.0 46.1h1M314.9 46.5h1M316.3 45.8h1M319.0 44.8h1M311.8 39.7h1M318.9 44.5h1M317.2 40.9h1M312.6 39.7h1M316.3 41.6h1M306.2 42.4h1M318.9 44.8h1M326.9 41.7h1M334.8 39.3h1M329.8 43.3h1M341.5 42.7h1M338.1 40.3h1M337.8 43.6h1M336.2 50.4h1M331.2 47.1h1M333.9 37.8h1M338.0 40.1h1M330.6 39.5h1M337.4 41.2h1M325.9 41.8h1M328.9 45.0h1M339.9 45.6h1M333.4 42.8h1M335.3 45.1h1M334.1 44.5h1M339.7 47.1h1M331.8 44.2h1M331.7 39.0h1M340.1 47.6h1M337.4 39.4h1M332.4 42.9h1M327.0 39.5h1M338.3 40.6h1M335.9 43.9h1M337.2 43.4h1M335.3 46.8h1M330.3 35.0h1M333.6 48.4h1M331.0 40.4h1M336.2 42.4h1M333.3 40.2h1M250.5 87.8h1M250.9 87.1h1M242.5 98.4h1M257.6 79.7h1M257.7 79.7h1M260.9 73.7h1M229.9 114.6h1M258.1 78.6h1M227.8 114.8h1M260.9 74.2h1M232.7 110.5h1M255.2 84.3h1M230.7 110.3h1M254.6 83.6h1M393.9 87.4h1M398.7 89.7h1M381.0 70.8h1M422.2 124.1h1M418.7 120.1h1M416.5 114.3h1M391.1 83.5h1M382.3 71.8h1M291.8 265.1h1M293.2 264.1h1M295.5 262.2h1M291.1 262.2h1M291.0 262.0h1M296.4 263.9h1M285.0 258.9h1M292.5 262.0h1M289.9 260.0h1M294.9 264.6h1M361.9 258.9h1M362.7 257.2h1M353.9 262.5h1M358.6 259.2h1M348.5 263.1h1M352.1 265.9h1M350.6 263.6h1M354.1 263.1h1M359.0 259.1h1M353.4 262.6h1" stroke="#4c4c4c" stroke-width="1" fill="none" opacity=".85"/></svg><div class="t" style="left:1.8px;top:7.5px;font-size:9px;color:#e0e0e0;">[ + ] [Front ] [Standard ] [Wireframe ]</div><svg class="a" style="left:0;top:0" width="120" height="310" viewBox="0 0 120 310"><g transform="translate(-687,-109)" font-family="Liberation Sans,sans-serif" font-size="6.5"><path d="M705.6 395.500V374" stroke="#2b30d8" stroke-width="1.8"/><path d="M705.6 395.100H729" stroke="#cc2a2e" stroke-width="1.4"/><path d="M707 394.500l2-3.5" stroke="#2ea43a" stroke-width="1.5"/><text x="704" y="373.5" fill="#2b30d8">z</text><text x="728" y="393" fill="#cc2a2e" font-size="5.5">x</text></g></svg><svg class="a" style="left:0;top:0;pointer-events:none" width="648" height="308" viewBox="0 0 648 308"><g transform="translate(-687,-109)"><ellipse cx="1287.9" cy="166.2" rx="31.5" ry="2.6" fill="#1c1c1c" stroke="#c8c8c8" stroke-width="0.9"/><path d="M1256.4 166.2l6 -1.200v2.400zM1319.4 166.2l-6 -1.200v2.400z" fill="#e0e0e0"/><rect x="1276.7" y="140.6" width="24.3" height="24.5" fill="#9c9c9c" opacity=".93"/><text x="1288.8" y="154.7" text-anchor="middle" font-family="Liberation Sans,sans-serif" font-size="5" font-weight="bold" fill="#6e6e6e" textLength="16.0" lengthAdjust="spacingAndGlyphs">FRONT</text></g></svg></div>
<div class="vp" style="left:35px;top:420px;width:647px;height:307px"><svg class="a" style="left:0;top:0" width="647" height="307" viewBox="0 0 647 307" shape-rendering="crispEdges"><path d="M12 0v307M31 0v307M49 0v307M68 0v307M87 0v307M105 0v307M124 0v307M143 0v307M161 0v307M180 0v307M199 0v307M217 0v307M236 0v307M255 0v307M273 0v307M292 0v307M311 0v307M330 0v307M348 0v307M367 0v307M386 0v307M404 0v307M423 0v307M442 0v307M460 0v307M479 0v307M498 0v307M516 0v307M535 0v307M554 0v307M572 0v307M591 0v307M610 0v307M628 0v307M0 7h647M0 26h647M0 44h647M0 63h647M0 82h647M0 100h647M0 119h647M0 138h647M0 156h647M0 175h647M0 194h647M0 212h647M0 231h647M0 250h647M0 269h647M0 287h647M0 306h647" stroke="#606060" stroke-width="1" fill="none" transform="translate(0.5,0.5)"/><path d="M330 0v307" stroke="#0c0c0c" stroke-width="1" fill="none" transform="translate(0.5,0.5)"/></svg><svg class="a" style="left:0;top:0" width="648" height="307" viewBox="0 0 648 307"><path d="M310.8 26.2C311.6 25.5 315.1 24.8 315.9 25.0C316.7 25.2 321.0 28.8 321.9 29.6C322.8 30.4 328.1 34.7 328.8 35.6C329.5 36.5 331.2 40.9 331.4 42.5C331.6 44.1 331.3 56.7 331.7 57.9C332.1 59.1 335.7 58.5 336.5 58.8C337.3 59.1 341.9 60.8 342.5 61.4C343.1 62.0 344.8 65.5 344.7 66.5C344.6 67.5 342.0 73.8 341.7 75.1C341.4 76.4 340.4 81.8 340.3 83.7C340.2 85.6 340.5 98.8 340.8 100.8C341.1 102.8 343.7 109.6 344.2 111.1C344.7 112.6 346.9 120.1 347.1 121.4C347.3 122.7 347.1 127.3 346.8 128.3C346.5 129.3 342.7 133.2 342.5 135.2C342.3 137.2 343.3 151.3 343.4 154.9C343.5 158.5 344.1 179.6 344.2 184.3C344.3 189.0 345.2 213.7 345.4 218.7C345.6 223.7 346.4 249.0 346.5 253.0C346.6 257.0 346.6 272.3 346.2 273.6C345.8 274.9 342.7 270.9 341.7 270.2C340.7 269.5 334.2 264.8 333.1 264.2C332.0 263.6 327.5 260.2 326.9 261.6C326.3 263.0 326.6 281.3 325.5 283.0C324.4 284.7 312.9 286.4 311.6 284.8C310.3 283.2 307.9 264.6 307.3 261.6C306.7 258.6 304.0 246.3 303.9 244.4C303.8 242.5 305.4 237.7 305.6 235.8C305.8 233.9 306.6 221.0 306.5 218.7C306.4 216.4 304.3 207.4 303.9 204.9C303.5 202.4 301.4 188.3 301.3 184.3C301.2 180.3 302.3 154.9 302.2 150.0C302.1 145.1 300.6 122.2 300.5 118.0C300.4 113.8 301.2 95.4 301.3 92.3C301.4 89.2 302.1 78.3 302.2 75.1C302.3 71.9 302.8 52.3 303.0 49.3C303.2 46.3 304.1 36.4 304.7 34.7C305.3 33.0 310.0 26.9 310.8 26.2ZM305.5 52.8a8.3 7.6 0 1 0 16.6 0a8.3 7.6 0 1 0 -16.6 0Z" fill="#d2d2d2" fill-rule="evenodd"/></svg><div class="t" style="left:2.6px;top:7.7px;font-size:9px;color:#e0e0e0;">[ + ] [Left ] [Standard ] [Wireframe ]</div><svg class="a" style="left:0;top:0" width="120" height="310" viewBox="0 0 120 310"><g transform="translate(-35,-420)" font-family="Liberation Sans,sans-serif" font-size="6.5"><path d="M55.8 707.800V684" stroke="#2b30d8" stroke-width="1.8"/><path d="M55.8 707.400H37" stroke="#2ea43a" stroke-width="1.4"/><rect x="56.6" y="703.5" width="2" height="3.5" fill="#cc2a2e"/><text x="54.5" y="683.5" fill="#2b30d8">z</text><text x="36.5" y="705" fill="#2ea43a" font-size="6">y</text></g></svg><svg class="a" style="left:0;top:0;pointer-events:none" width="648" height="308" viewBox="0 0 648 308"><g transform="translate(-35,-420)"><ellipse cx="637.9" cy="477.3" rx="29.6" ry="2.6" fill="#1c1c1c" stroke="#c8c8c8" stroke-width="0.9"/><path d="M608.3 477.3l6 -1.200v2.400zM667.5 477.3l-6 -1.200v2.400z" fill="#e0e0e0"/><rect x="625.7" y="452.1" width="24.3" height="23.8" fill="#9c9c9c" opacity=".93"/><text x="637.9" y="465.8" text-anchor="middle" font-family="Liberation Sans,sans-serif" font-size="5" font-weight="bold" fill="#6e6e6e" textLength="12.8" lengthAdjust="spacingAndGlyphs">LEFT</text></g></svg></div>
<div class="vp" style="left:685px;top:420px;width:648px;height:308px;border:2px solid #8e8354;background:linear-gradient(#1a1a1a,#4c4c4c)"><svg class="a" style="left:0;top:0" width="644" height="304" viewBox="0 0 644 304"><defs><linearGradient id="coatR" x1="0" y1="0" x2="1" y2="0"><stop offset="0" stop-color="#c9ab8a"/><stop offset=".55" stop-color="#c6a785"/><stop offset="1" stop-color="#a98c6c"/></linearGradient><linearGradient id="coatL" x1="0" y1="0" x2="1" y2="0"><stop offset="0" stop-color="#b99b7a"/><stop offset="1" stop-color="#9f8466"/></linearGradient><linearGradient id="pants" x1="0" y1="0" x2="1" y2="0"><stop offset="0" stop-color="#8a6c5c"/><stop offset=".45" stop-color="#a88a78"/><stop offset="1" stop-color="#8d6f5e"/></linearGradient><linearGradient id="slv" x1="0" y1="0" x2="1" y2="1"><stop offset="0" stop-color="#c8aa89"/><stop offset="1" stop-color="#b29473"/></linearGradient></defs><path d="M274.0 213.8L137.7 306.5M274.0 213.8L447.8 284.5M285.1 218.3L148.6 312.2M264.9 220.0L438.6 291.9M296.4 222.9L159.6 318.0M255.7 226.2L429.3 299.3M307.9 227.6L170.8 323.9M246.5 232.5L419.9 306.9M319.6 232.4L182.3 329.9M237.1 238.9L410.4 314.5M331.4 237.2L193.9 335.9M227.6 245.3L400.8 322.2M343.5 242.1L205.7 342.1M218.1 251.8L391.1 330.0M355.8 247.1L217.8 348.5M208.4 258.4L381.2 337.9M368.3 252.2L230.1 354.9M198.7 265.1L371.2 345.9M380.9 257.3L242.6 361.4M188.8 271.8L361.1 354.0M393.9 262.6L255.3 368.1M178.8 278.6L350.9 362.2M407.0 267.9L268.3 374.9M168.7 285.4L340.5 370.5M420.3 273.4L281.5 381.8M158.5 292.4L330.1 378.9M433.9 278.9L295.0 388.9M148.2 299.4L319.4 387.5M447.8 284.5L308.7 396.1M137.7 306.5L308.7 396.1" stroke="#7a7a7a" stroke-width="0.9" fill="none"/><path d="M355.8 247.1L217.8 348.5M208.4 258.4L381.2 337.9" stroke="#0a0a0a" stroke-width="1.2" fill="none"/><g transform="translate(-687,-422)"><polygon points="949.0,482.0 960.0,468.0 971.0,464.5 990.8,472.7 993.0,500.0 994.0,545.0 993.0,557.0 949.0,557.0" fill="#0c0c0c" /><path d="M971.2 464.800C979 465.5 986 468.5 990.8 472.7" stroke="#6a665e" stroke-width="2" fill="none"/><path d="M966 477c2-2.5 6-2 7.5 2c1.5 5 6 8 9.5 13.500l-1 5.500c-8-1-18-.500-27 1.500c1-7 6-13 11-22.500z" fill="#474747"/><path d="M953 504c6-4 30-6 40-5l0 11c-6 0-12 1-17 5c-8 1-17-3-23-11z" fill="#2e2e2e"/><path d="M951.1 500.600C957 500.5 962 497.8 968 497.700S986 497.2 992.8 499.2" stroke="#b4b4b4" stroke-width="1.1" fill="none"/><polygon points="974.0,580.0 992.0,580.0 986.5,613.5 983.4,634.3 980.3,663.5 978.2,663.5 980.3,634.3 975.1,617.6" fill="#7c6253" /><path d="M949.0 551.0C950.8 549.4 966.3 552.7 970.0 553.0C973.7 553.3 991.9 552.9 993.8 555.0C995.7 557.1 993.1 575.6 992.5 578.0C991.9 580.4 987.5 583.0 986.0 584.0C984.5 585.0 975.9 587.2 975.0 590.0C974.1 592.8 974.7 613.9 975.1 617.6C975.5 621.3 980.0 630.5 980.3 634.3C980.6 638.1 978.6 659.4 978.2 663.5C977.8 667.6 976.2 681.7 975.1 683.3C974.0 684.9 965.6 684.6 964.6 682.3C963.6 680.0 963.0 659.2 962.6 655.2C962.2 651.2 960.1 637.8 959.4 634.3C958.7 630.8 955.1 617.0 954.2 613.5C953.3 610.0 949.5 596.1 949.0 592.6C948.5 589.1 948.0 575.2 948.0 571.7C948.0 568.2 947.2 552.6 949.0 551.0Z" fill="url(#pants)" /><polygon points="950.5,552.5 993.8,556.0 993.8,562.0 972.0,565.5 951.5,559.0" fill="#b9a08c" /><polygon points="956.3,562.5 966.7,568.5 965.0,573.5 954.8,567.5" fill="#d6c8bc" /><polygon points="958.0,569.5 990.0,579.0 990.0,584.5 957.0,574.0" fill="#ab8e7b" /><path d="M949 575q12 5 25 2M951 600q12 5 24 1M958 633q10 4 21 0" stroke="#86695a" stroke-width="1" fill="none" opacity=".8"/><polygon points="951.0,541.0 977.0,546.0 993.5,543.0 993.5,556.0 950.0,552.5" fill="#0c0c0c" /><path d="M959.5 547.500q6 .500 8.5 7l-7 1.500z" fill="#5a5a5a"/><path d="M954.5 523.7C954.5 520.9 956.9 513.9 958.0 513.0C959.1 512.1 964.5 514.2 966.0 514.5C967.5 514.8 971.5 516.2 973.2 515.8C974.9 515.4 981.2 511.4 983.0 510.9C984.8 510.4 990.2 510.2 990.8 510.9C991.4 511.6 990.3 516.6 988.9 517.8C987.5 519.0 978.2 519.9 977.1 522.7C976.0 525.5 978.3 543.8 977.4 546.0C976.5 548.2 969.9 545.5 968.0 545.0C966.1 544.5 959.4 543.6 958.0 541.5C956.6 539.4 954.5 526.6 954.5 523.7Z" fill="#e8e8e8" /><path d="M953.0 510.0C953.4 508.3 956.9 512.1 958.0 513.0C959.1 513.9 964.0 517.4 964.0 519.0C964.0 520.6 958.6 526.8 958.0 529.0C957.4 531.2 958.4 541.4 958.0 541.5C957.6 541.6 954.5 533.1 954.0 530.0C953.5 526.9 952.6 511.7 953.0 510.0Z" fill="#aea9a4" /><path d="M977.1 522.7C977.9 520.8 987.8 518.4 988.9 517.8C990.0 517.2 993.4 512.2 993.8 514.0C994.2 515.8 995.2 541.7 994.6 544.3C994.0 546.9 986.3 552.7 985.0 553.5C983.7 554.3 976.2 557.0 975.7 556.5C975.2 556.0 977.3 548.3 977.4 546.0C977.5 543.7 976.3 524.6 977.1 522.7Z" fill="#b6987a" /><path d="M945.7 480.5C946.0 478.3 948.9 475.1 950.0 474.0C951.1 472.9 957.6 467.6 959.4 466.8C961.2 466.0 970.0 464.4 971.2 464.3C972.4 464.2 974.2 465.1 973.5 466.0C972.8 466.9 964.3 472.7 962.4 474.6C960.5 476.5 952.1 486.3 951.1 488.4C950.1 490.4 950.7 495.7 950.6 499.2C950.5 502.7 949.6 525.7 949.5 530.0C949.4 534.3 949.1 545.7 949.0 550.9C948.9 556.1 947.8 585.6 948.0 592.6C948.2 599.6 950.4 628.4 951.1 634.3C951.8 640.2 955.8 659.2 956.3 663.5C956.8 667.8 957.3 683.6 957.3 685.4C957.3 687.2 957.2 687.0 956.3 685.4C955.3 683.8 947.0 669.9 945.9 665.6C944.8 661.3 942.8 640.4 942.7 634.3C942.6 628.2 944.5 601.3 944.8 592.6C945.1 583.9 945.8 537.7 945.9 530.0C946.0 522.3 946.0 504.1 946.0 500.0C946.0 495.9 945.4 482.7 945.7 480.5Z" fill="url(#coatL)" /><path d="M936.9 495.2C938.1 494.6 941.0 495.6 942.0 496.0C943.0 496.4 946.2 498.4 946.7 499.5C947.2 500.6 948.2 505.0 947.5 506.5C946.8 508.0 941.8 512.8 940.0 514.5C938.2 516.2 931.6 521.7 929.4 523.7C927.2 525.7 919.8 532.8 918.0 534.5C916.2 536.2 912.3 539.8 911.0 540.5C909.7 541.2 906.2 542.1 905.3 541.8C904.4 541.5 902.0 538.5 901.8 537.5C901.6 536.5 902.5 533.5 903.5 532.0C904.5 530.5 910.3 524.9 912.0 523.0C913.7 521.1 919.0 515.5 920.8 513.4C922.6 511.2 928.4 503.3 930.0 501.5C931.6 499.7 935.7 495.8 936.9 495.2Z" fill="url(#slv)" /><ellipse cx="941.8" cy="499.6" rx="5" ry="3.6" transform="rotate(28 941.8 499.6)" fill="#1a1715"/><path d="M937 495.500q6-1 10 4" stroke="#c9b59c" stroke-width="1" fill="none"/><path d="M903.5 531.500l6.5 8" stroke="#9c8163" stroke-width="1"/><polygon points="1009.5,502.1 1015.4,493.8 1013.5,508.0 1015.0,520.0 1018.3,525.7 1007.5,525.7" fill="#0c0c0c" /><path d="M1012.5 499c-1.5 9-.500 19 5.5 26.5" stroke="#a9a39a" stroke-width=".900" fill="none"/><path d="M1016.8 529.0C1016.8 528.1 1017.6 526.4 1018.3 525.7C1019.0 525.1 1022.8 523.0 1024.0 522.5C1025.2 522.0 1029.0 520.1 1030.0 520.8C1031.0 521.4 1032.4 526.6 1033.5 529.0C1034.6 531.4 1039.3 541.8 1041.0 545.0C1042.7 548.2 1048.0 557.8 1050.2 561.3C1052.4 564.8 1061.1 577.6 1062.7 580.1C1064.3 582.6 1065.9 585.4 1065.8 586.3C1065.7 587.2 1063.1 589.1 1062.0 589.5C1060.9 589.9 1055.5 590.9 1054.4 590.5C1053.3 590.1 1052.5 587.6 1051.2 585.3C1049.9 583.0 1043.6 570.6 1041.8 567.6C1040.0 564.6 1034.7 557.3 1033.0 555.0C1031.3 552.7 1026.5 546.6 1025.1 544.6C1023.6 542.6 1019.3 536.6 1018.5 535.0C1017.7 533.4 1016.8 529.9 1016.8 529.0Z" fill="url(#slv)" /><path d="M1051 584.500q7 0 13-3.5" stroke="#9c8163" stroke-width="1" fill="none"/><path d="M990.8 471.2C991.8 471.3 1001.4 480.5 1003.0 482.0C1004.6 483.5 1014.8 492.5 1015.4 493.8C1016.0 495.1 1012.0 500.4 1011.5 501.1C1011.0 501.8 1008.8 502.6 1008.5 504.1C1008.2 505.6 1007.7 522.0 1007.5 523.7C1007.3 525.4 1005.3 526.8 1005.3 530.0C1005.3 533.2 1007.1 566.1 1007.4 571.7C1007.7 577.3 1009.2 607.9 1009.5 613.5C1009.8 619.1 1011.3 650.2 1011.6 655.2C1011.9 660.2 1015.1 686.1 1014.7 688.6C1014.3 691.1 1006.4 692.1 1005.0 692.5C1003.6 692.9 995.7 694.6 993.8 694.8C991.9 695.0 978.1 696.9 977.2 694.8C976.3 692.7 979.9 667.5 980.3 663.5C980.7 659.5 983.0 637.6 983.4 634.3C983.8 631.0 985.9 617.0 986.5 613.5C987.1 610.0 991.3 586.1 991.8 582.2C992.3 578.3 993.7 558.1 993.8 555.0C993.9 551.9 993.9 538.8 993.8 535.0C993.7 531.2 993.2 501.8 992.8 498.2C992.4 494.6 987.5 482.3 987.4 480.5C987.3 478.7 989.8 471.1 990.8 471.2Z" fill="url(#coatR)" /><path d="M990 480q10 3 22 19" stroke="#ae9172" stroke-width="1" fill="none"/><path d="M1008.5 504.100C1006 530 1009 600 1013 687" stroke="#9c8061" stroke-width="1.2" fill="none" opacity=".7"/></g></svg><div class="t" style="left:42.0px;top:29.9px;font-size:9.2px;color:#e3cf62;transform:scaleX(0.921);transform-origin:0 0;">Total</div><div class="t" style="left:10.0px;top:42.3px;font-size:9.2px;color:#e3cf62;transform:scaleX(0.898);transform-origin:0 0;">Polys:</div><div class="t" style="left:42.0px;top:42.3px;font-size:9.2px;color:#e3cf62;transform:scaleX(0.899);transform-origin:0 0;">117,697</div><div class="t" style="left:10.0px;top:54.8px;font-size:9.2px;color:#e3cf62;transform:scaleX(0.957);transform-origin:0 0;">Verts:</div><div class="t" style="left:42.0px;top:54.8px;font-size:9.2px;color:#e3cf62;transform:scaleX(0.926);transform-origin:0 0;">121,163</div><div class="t" style="left:10.0px;top:79.7px;font-size:9.2px;color:#e3cf62;transform:scaleX(0.812);transform-origin:0 0;">FPS:</div><div class="t" style="left:42.0px;top:79.7px;font-size:9.2px;color:#e3cf62;transform:scaleX(0.940);transform-origin:0 0;">Inactive</div><div class="t" style="left:1.8px;top:5.7px;font-size:9px;color:#e6e6e6;transform:scaleX(0.965);transform-origin:0 0;">[ + ] [Perspective ] [User Defined ] [Default Shading ]</div><svg class="a" style="left:0;top:0" width="120" height="310" viewBox="0 0 120 310"><g transform="translate(-687,-422)" font-family="Liberation Sans,sans-serif" font-size="6.5"><path d="M705.5 707V690" stroke="#2b30d8" stroke-width="1.8"/><path d="M705.5 707L720.5 697.8" stroke="#2ea43a" stroke-width="1.5"/><path d="M705.5 707L725.4 710.2" stroke="#cc2a2e" stroke-width="1.5"/><text x="705" y="689" fill="#2b30d8">z</text></g></svg><svg class="a" style="left:0;top:0" width="644" height="304" viewBox="0 0 644 304"><g transform="translate(-687,-422)"><ellipse cx="1288.5" cy="478.4" rx="25.2" ry="11.3" fill="#2a2a2a" stroke="#808287" stroke-width="5.4"/><ellipse cx="1288.5" cy="479.4" rx="27.5" ry="13.3" fill="none" stroke="#9a9c a0" stroke-width="0"/><path d="M1288.1 447.900L1303.6 452.200L1301.9 471.900L1291.5 481L1274.4 473.700L1273.1 455.600Z" fill="#8e8e8e"/><path d="M1288.1 447.900L1303.6 452.200L1290.7 461.600L1273.1 455.600Z" fill="#9a9a9a"/><path d="M1290.7 461.600L1303.6 452.200L1301.9 471.900L1291.5 481Z" fill="#858585"/><text x="1270.5" y="489.5" text-anchor="middle" font-family="Liberation Sans,sans-serif" font-size="6.5" font-weight="bold" fill="#d0d0d0">S</text><text x="1312.5" y="486.5" text-anchor="middle" font-family="Liberation Sans,sans-serif" font-size="6.5" font-weight="bold" fill="#d0d0d0">E</text></g></svg></div>
<div class="a" style="left:1338px;top:110px;width:160px;height:3px;border-top:1px dotted #9a9a9a;border-bottom:1px dotted #9a9a9a"></div><div class="a" style="left:1337px;top:116px;width:163px;height:21px;background:#3b3b3b"></div><div class="a" style="left:1337px;top:116px;width:24px;height:21px;background:#474747"></div><div class="a" style="left:1386px;top:118px;width:1px;height:17px;background:#4a4a4a"></div><div class="a" style="left:1411px;top:118px;width:1px;height:17px;background:#4a4a4a"></div><div class="a" style="left:1436px;top:118px;width:1px;height:17px;background:#4a4a4a"></div><div class="a" style="left:1461px;top:118px;width:1px;height:17px;background:#4a4a4a"></div><div class="a" style="left:1486px;top:118px;width:1px;height:17px;background:#4a4a4a"></div><svg class="a" style="left:1336.4px;top:114.3px" width="24" height="24" viewBox="0 0 24 24"><path d="M12 5.500v13M5.5 12h13" stroke="#f4f4f4" stroke-width="1.7"/></svg><svg class="a" style="left:1361.7px;top:114.3px" width="24" height="24" viewBox="0 0 24 24"><rect x="6.5" y="6.5" width="11" height="11" fill="none" stroke="#4aa7a0" stroke-width="1.2"/><g fill="#4aa7a0"><rect x="5" y="5" width="3" height="3"/><rect x="16" y="5" width="3" height="3"/><rect x="5" y="16" width="3" height="3"/><rect x="16" y="16" width="3" height="3"/></g><path d="M9 16c0-4 3-7 7-7" fill="none" stroke="#a8a8a8" stroke-width="1.5"/></svg><svg class="a" style="left:1386.8px;top:114.3px" width="24" height="24" viewBox="0 0 24 24"><rect x="7.5" y="5.5" width="9" height="3.5" fill="#a8a8a8"/><path d="M12 9v3M6.5 16v-4h11v4" fill="none" stroke="#4aa7a0" stroke-width="1.2"/><rect x="5" y="15.5" width="3" height="3" fill="#4aa7a0"/><rect x="16" y="15.5" width="3" height="3" fill="#4aa7a0"/></svg><svg class="a" style="left:1411.9px;top:114.3px" width="24" height="24" viewBox="0 0 24 24"><path d="M8 6.500a6.5 6.5 0 0 0 0 11" fill="none" stroke="#4aa7a0" stroke-width="1.2"/><path d="M10 7a6 6 0 0 0 0 10" fill="none" stroke="#4aa7a0" stroke-width="1.2" opacity=".7"/><circle cx="14" cy="12" r="5.2" fill="#a4a4a4"/></svg><svg class="a" style="left:1436.4px;top:114.3px" width="24" height="24" viewBox="0 0 24 24"><rect x="5.5" y="6.5" width="13" height="8.5" fill="#a4a4a4"/><path d="M9 17.500h6" stroke="#a4a4a4" stroke-width="1.4"/></svg><svg class="a" style="left:1461.4px;top:114.3px" width="24" height="24" viewBox="0 0 24 24"><path d="M7 6.500a3.2 3.2 0 0 0 3.8 4.200l6 6.3 1.5-1.5-6.2-6a3.2 3.2 0 0 0-3.6-4.400l1.8 2-1.2 1.400z" fill="#a8a8a8"/></svg><div class="a" style="left:1339px;top:141px;width:16.500px;height:15.500px;background:#5a86d0;border-radius:2px"></div><svg class="a" style="left:1335.3px;top:136.6px" width="24" height="24" viewBox="0 0 24 24"><circle cx="12" cy="12" r="5.3" fill="#d8d8d8"/></svg><svg class="a" style="left:1352.4px;top:136.6px" width="24" height="24" viewBox="0 0 24 24"><circle cx="9.5" cy="9.5" r="4" fill="#d0d0d0"/><rect x="11" y="11" width="7" height="7" fill="#d0d0d0" stroke="#444" stroke-width="1"/><circle cx="11.5" cy="11.5" r="2.2" fill="#444"/></svg><svg class="a" style="left:1369.0px;top:136.6px" width="24" height="24" viewBox="0 0 24 24"><path d="M12 5.500a4.3 4.3 0 0 1 2.3 8v2.500h-4.600v-2.500a4.3 4.3 0 0 1 2.3-8z" fill="#d0d0d0"/><rect x="10.2" y="16.8" width="3.6" height="1.6" fill="#d0d0d0"/></svg><svg class="a" style="left:1386.2px;top:136.6px" width="24" height="24" viewBox="0 0 24 24"><rect x="6" y="8" width="8.5" height="8" rx="1" fill="#d0d0d0"/><path d="M15 11l3.5-2.500v7L15 13z" fill="#d0d0d0"/></svg><svg class="a" style="left:1403.0px;top:136.6px" width="24" height="24" viewBox="0 0 24 24"><path d="M6.5 6v12h12z" fill="none" stroke="#d0d0d0" stroke-width="1.7"/><path d="M6.5 14.500h4" stroke="#d0d0d0" stroke-width="1"/></svg><svg class="a" style="left:1420.6px;top:136.6px" width="24" height="24" viewBox="0 0 24 24"><g fill="none" stroke="#d0d0d0" stroke-width="1.4"><path d="M6 9c2.5-2 4 2 6.5 0s4 2 6 0"/><path d="M6 12.500c2.5-2 4 2 6.5 0s4 2 6 0"/><path d="M6 16c2.5-2 4 2 6.5 0s4 2 6 0"/></g></svg><svg class="a" style="left:1438.0px;top:136.6px" width="24" height="24" viewBox="0 0 24 24"><circle cx="9" cy="8.5" r="2" fill="none" stroke="#d0d0d0" stroke-width="1.5"/><circle cx="14.5" cy="14.5" r="3" fill="none" stroke="#d0d0d0" stroke-width="1.8"/><circle cx="14.5" cy="14.5" r="4.3" fill="none" stroke="#d0d0d0" stroke-width="1.3" stroke-dasharray="1.5 1.9"/></svg><div class="a" style="left:1338px;top:162px;width:160px;height:15px;background:#5d5d5d"></div><div class="t" style="left:1341.7px;top:166.7px;font-size:8.6px;color:#e2e2e2;transform:scaleX(0.966);transform-origin:0 0;">Standard Primitives</div><div class="a" style="left:1486.500px;top:167.500px;width:0;height:0;border-left:3px solid transparent;border-right:3px solid transparent;border-top:4px solid #eee"></div><div class="a" style="left:1494.5px;top:180px;width:5.5px;height:547px;background:#3d3d3d"></div><div class="a" style="left:1338px;top:182px;width:153px;height:130.500px;background:#4e4e4e;border:1px solid #414141"></div><div class="a" style="left:1342.500px;top:186.500px;width:0;height:0;border-left:2.800px solid transparent;border-right:2.800px solid transparent;border-top:3.600px solid #d8d8d8"></div><div class="t" style="left:1353.0px;top:186.1px;font-size:8.6px;color:#f2f2f2;font-weight:bold;transform:scaleX(1.099);transform-origin:0 0;">Object Type</div><div class="a" style="left:1481.500px;top:185.500px;width:3px;height:5px;border-left:1px dotted #6c6c6c;border-right:1px dotted #6c6c6c"></div><div class="a" style="left:1379px;top:200.800px;width:8.500px;height:8.500px;background:#585858"></div><div class="t" style="left:1392.2px;top:202.1px;font-size:8.6px;color:#858585;transform:scaleX(0.946);transform-origin:0 0;">AutoGrid</div><div class="a" style="left:1358.8px;top:213.4px;width:52.400px;height:12.500px;background:#626262;border-radius:2px"></div><div class="t" style="left:1377.4px;top:217.2px;font-size:8.6px;color:#ececec;transform:scaleX(1.026);transform-origin:0 0;">Box</div><div class="a" style="left:1419.7px;top:213.4px;width:52.400px;height:12.500px;background:#626262;border-radius:2px"></div><div class="t" style="left:1435.7px;top:217.2px;font-size:8.6px;color:#ececec;">Cone</div><div class="a" style="left:1358.8px;top:229.8px;width:52.400px;height:12.500px;background:#626262;border-radius:2px"></div><div class="t" style="left:1371.2px;top:233.6px;font-size:8.6px;color:#ececec;transform:scaleX(0.992);transform-origin:0 0;">Sphere</div><div class="a" style="left:1419.7px;top:229.8px;width:52.400px;height:12.500px;background:#626262;border-radius:2px"></div><div class="t" style="left:1425.4px;top:233.6px;font-size:8.6px;color:#ececec;transform:scaleX(0.932);transform-origin:0 0;">GeoSphere</div><div class="a" style="left:1358.8px;top:246.2px;width:52.400px;height:12.500px;background:#626262;border-radius:2px"></div><div class="t" style="left:1369.5px;top:250.1px;font-size:8.6px;color:#ececec;transform:scaleX(0.983);transform-origin:0 0;">Cylinder</div><div class="a" style="left:1419.7px;top:246.2px;width:52.400px;height:12.500px;background:#626262;border-radius:2px"></div><div class="t" style="left:1436.2px;top:250.1px;font-size:8.6px;color:#ececec;transform:scaleX(1.011);transform-origin:0 0;">Tube</div><div class="a" style="left:1358.8px;top:262.7px;width:52.400px;height:12.500px;background:#626262;border-radius:2px"></div><div class="t" style="left:1374.0px;top:266.5px;font-size:8.6px;color:#ececec;transform:scaleX(1.046);transform-origin:0 0;">Torus</div><div class="a" style="left:1419.7px;top:262.7px;width:52.400px;height:12.500px;background:#626262;border-radius:2px"></div><div class="t" style="left:1430.4px;top:266.5px;font-size:8.6px;color:#ececec;transform:scaleX(0.983);transform-origin:0 0;">Pyramid</div><div class="a" style="left:1358.8px;top:279.1px;width:52.400px;height:12.500px;background:#626262;border-radius:2px"></div><div class="t" style="left:1371.2px;top:282.9px;font-size:8.6px;color:#ececec;transform:scaleX(1.065);transform-origin:0 0;">Teapot</div><div class="a" style="left:1419.7px;top:279.1px;width:52.400px;height:12.500px;background:#626262;border-radius:2px"></div><div class="t" style="left:1435.2px;top:282.9px;font-size:8.6px;color:#ececec;transform:scaleX(0.977);transform-origin:0 0;">Plane</div><div class="a" style="left:1358.8px;top:295.5px;width:52.400px;height:12.500px;background:#626262;border-radius:2px"></div><div class="t" style="left:1368.5px;top:299.3px;font-size:8.6px;color:#ececec;transform:scaleX(1.015);transform-origin:0 0;">TextPlus</div><div class="a" style="left:1338px;top:316px;width:153px;height:43px;background:#4e4e4e;border:1px solid #414141"></div><div class="a" style="left:1342.500px;top:320.800px;width:0;height:0;border-left:2.800px solid transparent;border-right:2.800px solid transparent;border-top:3.600px solid #d8d8d8"></div><div class="t" style="left:1353.0px;top:320.4px;font-size:8.6px;color:#f2f2f2;font-weight:bold;transform:scaleX(1.043);transform-origin:0 0;">Name and Color</div><div class="a" style="left:1481.500px;top:319.500px;width:3px;height:5px;border-left:1px dotted #6c6c6c;border-right:1px dotted #6c6c6c"></div><div class="a" style="left:1356.500px;top:337px;width:103px;height:14px;background:#5a5a5a"></div><div class="a" style="left:1461.800px;top:336.400px;width:13px;height:15px;background:#d6348f;border:1px solid #7a7a7a"></div>
<div class="a" style="left:2px;top:733px;width:3px;height:35px;border-left:1px dotted #8a8a8a;border-right:1px dotted #8a8a8a"></div><div class="a" style="left:8.3px;top:732.7px;width:10.7px;height:12.0px;background:#5e5e5e;border-radius:2px"></div><div class="a" style="left:20.0px;top:732.7px;width:96.0px;height:12.0px;background:#626262;border-radius:3px"></div><div class="a" style="left:118.0px;top:732.7px;width:11.0px;height:12.0px;background:#5e5e5e;border-radius:2px"></div><div class="t" style="left:10.5px;top:735.1px;font-size:9.5px;color:#e4e4e4;transform:scaleX(1.081);transform-origin:0 0;">&lt;</div><div class="t" style="left:120.8px;top:735.1px;font-size:9.5px;color:#e4e4e4;transform:scaleX(1.081);transform-origin:0 0;">></div><div class="t" style="left:54.0px;top:735.8px;font-size:8.6px;color:#ececec;transform:scaleX(1.027);transform-origin:0 0;">0 / 100</div><div class="a" style="left:8.0px;top:748.3px;width:39.3px;height:20.0px;background:#3c3c3c;"></div><div class="a" style="left:47.3px;top:748.3px;width:1414.2px;height:20.0px;background:#2c2c2c;"></div><div class="a" style="left:1461.5px;top:748.3px;width:36.5px;height:1.1px;background:#2c2c2c;"></div><svg class="a" style="left:47px;top:748.3px" width="1415" height="20" viewBox="0 0 1415 20" shape-rendering="crispEdges"><path d="M5 0v10.6M19 0v9.4M33 0v9.4M47 0v9.4M61 0v9.4M75 0v10.6M89 0v9.4M103 0v9.4M117 0v9.4M132 0v9.4M146 0v10.6M160 0v9.4M174 0v9.4M188 0v9.4M202 0v9.4M216 0v10.6M230 0v9.4M244 0v9.4M258 0v9.4M272 0v9.4M286 0v10.6M300 0v9.4M314 0v9.4M328 0v9.4M342 0v9.4M356 0v10.6M370 0v9.4M384 0v9.4M398 0v9.4M412 0v9.4M426 0v10.6M440 0v9.4M454 0v9.4M468 0v9.4M482 0v9.4M496 0v10.6M510 0v9.4M524 0v9.4M538 0v9.4M553 0v9.4M567 0v10.6M581 0v9.4M595 0v9.4M609 0v9.4M623 0v9.4M637 0v10.6M651 0v9.4M665 0v9.4M679 0v9.4M693 0v9.4M707 0v10.6M721 0v9.4M735 0v9.4M749 0v9.4M763 0v9.4M777 0v10.6M791 0v9.4M805 0v9.4M819 0v9.4M833 0v9.4M847 0v10.6M861 0v9.4M875 0v9.4M889 0v9.4M903 0v9.4M917 0v10.6M931 0v9.4M945 0v9.4M960 0v9.4M974 0v9.4M988 0v10.6M1002 0v9.4M1016 0v9.4M1030 0v9.4M1044 0v9.4M1058 0v10.6M1072 0v9.4M1086 0v9.4M1100 0v9.4M1114 0v9.4M1128 0v10.6M1142 0v9.4M1156 0v9.4M1170 0v9.4M1184 0v9.4M1198 0v10.6M1212 0v9.4M1226 0v9.4M1240 0v9.4M1254 0v9.4M1268 0v10.6M1282 0v9.4M1296 0v9.4M1310 0v9.4M1324 0v9.4M1338 0v10.6M1352 0v9.4M1366 0v9.4M1381 0v9.4M1395 0v9.4M1409 0v10.6" stroke="#949494" stroke-width="1" transform="translate(.5,0)"/></svg><div class="a" style="left:48.7px;top:750.3px;width:6.3px;height:18.0px;background:#a8992e;"></div><div class="t" style="left:49.6px;top:760.3px;font-size:8.4px;color:#f2e24a;font-weight:bold;transform:scaleX(0.985);transform-origin:0 0;">0</div><div class="t" style="left:120.5px;top:760.2px;font-size:8.4px;color:#e2e2e2;transform:scaleX(0.900);transform-origin:0 0;">5</div><div class="t" style="left:188.5px;top:760.2px;font-size:8.4px;color:#e2e2e2;transform:scaleX(0.900);transform-origin:0 0;">10</div><div class="t" style="left:258.7px;top:760.2px;font-size:8.4px;color:#e2e2e2;transform:scaleX(0.900);transform-origin:0 0;">15</div><div class="t" style="left:328.9px;top:760.2px;font-size:8.4px;color:#e2e2e2;transform:scaleX(0.900);transform-origin:0 0;">20</div><div class="t" style="left:399.0px;top:760.2px;font-size:8.4px;color:#e2e2e2;transform:scaleX(0.900);transform-origin:0 0;">25</div><div class="t" style="left:469.2px;top:760.2px;font-size:8.4px;color:#e2e2e2;transform:scaleX(0.900);transform-origin:0 0;">30</div><div class="t" style="left:539.4px;top:760.2px;font-size:8.4px;color:#e2e2e2;transform:scaleX(0.900);transform-origin:0 0;">35</div><div class="t" style="left:609.6px;top:760.2px;font-size:8.4px;color:#e2e2e2;transform:scaleX(0.900);transform-origin:0 0;">40</div><div class="t" style="left:679.7px;top:760.2px;font-size:8.4px;color:#e2e2e2;transform:scaleX(0.900);transform-origin:0 0;">45</div><div class="t" style="left:749.9px;top:760.2px;font-size:8.4px;color:#e2e2e2;transform:scaleX(0.900);transform-origin:0 0;">50</div><div class="t" style="left:820.1px;top:760.2px;font-size:8.4px;color:#e2e2e2;transform:scaleX(0.900);transform-origin:0 0;">55</div><div class="t" style="left:890.2px;top:760.2px;font-size:8.4px;color:#e2e2e2;transform:scaleX(0.900);transform-origin:0 0;">60</div><div class="t" style="left:960.4px;top:760.2px;font-size:8.4px;color:#e2e2e2;transform:scaleX(0.900);transform-origin:0 0;">65</div><div class="t" style="left:1030.6px;top:760.2px;font-size:8.4px;color:#e2e2e2;transform:scaleX(0.900);transform-origin:0 0;">70</div><div class="t" style="left:1100.7px;top:760.2px;font-size:8.4px;color:#e2e2e2;transform:scaleX(0.900);transform-origin:0 0;">75</div><div class="t" style="left:1170.9px;top:760.2px;font-size:8.4px;color:#e2e2e2;transform:scaleX(0.900);transform-origin:0 0;">80</div><div class="t" style="left:1241.1px;top:760.2px;font-size:8.4px;color:#e2e2e2;transform:scaleX(0.900);transform-origin:0 0;">85</div><div class="t" style="left:1311.3px;top:760.2px;font-size:8.4px;color:#e2e2e2;transform:scaleX(0.900);transform-origin:0 0;">90</div><div class="t" style="left:1381.4px;top:760.2px;font-size:8.4px;color:#e2e2e2;transform:scaleX(0.900);transform-origin:0 0;">95</div><div class="t" style="left:1449.5px;top:760.2px;font-size:8.4px;color:#e2e2e2;transform:scaleX(0.900);transform-origin:0 0;">100</div><svg class="a" style="left:13.3px;top:749.0px" width="20" height="20" viewBox="0 0 20 20"><path d="M5.2 6v5.500M5.2 13v1.5" stroke="#ddd" stroke-width="1.6"/><path d="M8 10c1.5-4.5 3-4.5 4.5 0s3 4.5 4.5 0" fill="none" stroke="#3fb5b0" stroke-width="1.5"/></svg><div class="a" style="left:3.5px;top:773.0px;width:76.5px;height:36.5px;background:#fdfdfd;"></div><div class="a" style="left:5.0px;top:775.0px;width:73.5px;height:14.3px;background:#e9c9c9;"></div><div class="a" style="left:3.5px;top:790.2px;width:76.5px;height:1.2px;background:#5a5a5a;"></div><div class="t" style="left:7.7px;top:793.8px;font-size:8.6px;color:#8e8e8e;font-family:'Liberation Mono',monospace;transform:scaleX(1.030);transform-origin:0 0;">MAXScript Mi</div><div class="a" style="left:73.5px;top:796.0px;width:1.0px;height:5.0px;background:#8e8e8e;"></div><div class="a" style="left:83.2px;top:771.7px;width:1.2px;height:38.3px;background:#2c2c2c;"></div><div class="t" style="left:87.0px;top:779.2px;font-size:8.6px;color:#f0f0f0;transform:scaleX(0.952);transform-origin:0 0;">None Selected</div><div class="t" style="left:87.0px;top:799.2px;font-size:8.6px;color:#f0f0f0;transform:scaleX(0.976);transform-origin:0 0;">Click or click-and-drag to select objects</div><svg class="a" style="left:796.4px;top:772.4px" width="20" height="20" viewBox="0 0 20 20"><g fill="none" stroke="#2a2a2a" stroke-width="1.3"><rect x="6.5" y="6.5" width="7" height="7" stroke-dasharray="2 1.2"/><path d="M3.5 6v-2.500h2.500M14 3.500h2.500v2.500M16.5 14v2.500h-2.500M6 16.500h-2.500v-2.5"/></g></svg><svg class="a" style="left:817.2px;top:772.6px" width="20" height="20" viewBox="0 0 20 20"><rect x="5.5" y="8.5" width="9" height="8" rx="1" fill="none" stroke="#2c2c2c" stroke-width="1.3"/><path d="M7.5 8.500v-2a2.5 2.5 0 0 1 5 0v2" fill="none" stroke="#2c2c2c" stroke-width="1.3"/><rect x="9.3" y="11" width="1.5" height="3.5" fill="#2c2c2c"/></svg><svg class="a" style="left:838.5px;top:772.5px" width="20" height="20" viewBox="0 0 20 20"><rect x="4.5" y="4" width="11" height="12" fill="#f2f2f2"/><circle cx="10" cy="10" r="3.2" fill="none" stroke="#333" stroke-width="1.3"/><path d="M10 4.500v3M10 12.500v3M5 10h2.500M12.5 10h2.5" stroke="#333" stroke-width="1.2"/></svg><div class="t" style="left:860.4px;top:778.7px;font-size:9px;color:#f0f0f0;font-weight:bold;transform:scaleX(0.889);transform-origin:0 0;">X:</div><div class="a" style="left:871.2px;top:775.8px;width:44.4px;height:13.2px;background:#5a5a5a;"></div><div class="t" style="left:926.4px;top:778.7px;font-size:9px;color:#f0f0f0;font-weight:bold;transform:scaleX(0.960);transform-origin:0 0;">Y:</div><div class="a" style="left:937.2px;top:775.8px;width:43.9px;height:13.2px;background:#5a5a5a;"></div><div class="t" style="left:992.4px;top:778.7px;font-size:9px;color:#f0f0f0;font-weight:bold;transform:scaleX(0.942);transform-origin:0 0;">Z:</div><div class="a" style="left:1002.7px;top:775.8px;width:44.2px;height:13.2px;background:#5a5a5a;"></div><div class="t" style="left:1058.9px;top:778.9px;font-size:8.6px;color:#f0f0f0;transform:scaleX(0.986);transform-origin:0 0;">Grid = 10.0cm</div><div class="a" style="left:1037.5px;top:795.7px;width:1.2px;height:12.0px;background:#2c2c2c;"></div><svg class="a" style="left:1036.4px;top:792.0px" width="20" height="20" viewBox="0 0 20 20"><g fill="none" stroke="#e4e4e4" stroke-width="1.1"><path d="M10 5l4.5 2.300v5.400L10 15l-4.5-2.300V7.300z"/><path d="M5.5 7.300L10 9.600l4.5-2.300M10 9.600V15"/></g></svg><div class="t" style="left:1059.6px;top:798.8px;font-size:8.6px;color:#f0f0f0;transform:scaleX(0.961);transform-origin:0 0;">Add Time Tag</div><svg class="a" style="left:1143.2px;top:772.3px" width="20" height="20" viewBox="0 0 20 20"><g transform="translate(10.0 10.0) scale(0.92) translate(-10.0 -10.0)"><path d="M4.5 5.500v9" stroke="#eee" stroke-width="1.5"/><path d="M10.5 5.500v9l-5-4.500zM16 5.500v9l-5-4.500z" fill="#eee"/></g></svg><div class="a" style="left:1162.4px;top:775.5px;width:1.8px;height:13.5px;background:#262626;"></div><svg class="a" style="left:1164.0px;top:772.3px" width="20" height="20" viewBox="0 0 20 20"><g transform="translate(10.0 10.0) scale(0.92) translate(-10.0 -10.0)"><path d="M10.5 5.500v9l-6-4.500z" fill="#eee"/><path d="M12.8 5.500v9M16 5.500v9" stroke="#eee" stroke-width="1.6"/></g></svg><svg class="a" style="left:1181.0px;top:772.3px" width="20" height="20" viewBox="0 0 20 20"><g transform="translate(10.0 10.0) scale(0.92) translate(-10.0 -10.0)"><path d="M4.5 3.500l11 6.5-11 6.500z" fill="#eee"/><path d="M19 15v4h-4z" fill="#ddd"/></g></svg><svg class="a" style="left:1198.6px;top:772.3px" width="20" height="20" viewBox="0 0 20 20"><g transform="translate(10.0 10.0) scale(0.92) translate(-10.0 -10.0)"><path d="M9.5 5.500v9l6-4.500z" fill="#eee"/><path d="M4 5.500v9M7.2 5.500v9" stroke="#eee" stroke-width="1.6"/></g></svg><div class="a" style="left:1217.8px;top:775.5px;width:1.8px;height:13.5px;background:#262626;"></div><svg class="a" style="left:1219.5px;top:772.3px" width="20" height="20" viewBox="0 0 20 20"><g transform="translate(10.0 10.0) scale(0.92) translate(-10.0 -10.0)"><path d="M15.5 5.500v9" stroke="#eee" stroke-width="1.5"/><path d="M4 5.500v9l5-4.500zM9.5 5.500v9l5-4.500z" fill="#eee"/></g></svg><svg class="a" style="left:1143.2px;top:789.8px" width="20" height="20" viewBox="0 0 20 20"><g transform="translate(10.0 10.0) scale(0.92) translate(-10.0 -10.0)"><path d="M9 6v8l-4.5-4zM11 6v8l4.5-4z" fill="#eee"/></g></svg><div class="a" style="left:1162.4px;top:793.0px;width:1.8px;height:14.0px;background:#262626;"></div><div class="a" style="left:1218.6px;top:793.0px;width:1.6px;height:14.0px;background:#262626;"></div><div class="a" style="left:1166.0px;top:793.3px;width:52.0px;height:13.0px;background:#5a5a5a;"></div><div class="t" style="left:1168.3px;top:796.6px;font-size:9px;color:#ececec;transform:scaleX(0.919);transform-origin:0 0;">0</div><svg class="a" style="left:1203.5px;top:789.8px" width="20" height="20" viewBox="0 0 20 20"><g transform="translate(10.0 10.0) scale(0.92) translate(-10.0 -10.0)"><path d="M10 5.500l2.3 3h-4.600zM10 14.500l2.3-3h-4.600z" fill="#e0e0e0"/></g></svg><svg class="a" style="left:1220.5px;top:789.8px" width="20" height="20" viewBox="0 0 20 20"><g transform="translate(10.0 10.0) scale(0.92) translate(-10.0 -10.0)"><circle cx="8" cy="8.5" r="4.6" fill="#c8c8c8"/><path d="M8 5.500v3h2.3" stroke="#444" stroke-width="1.2" fill="none"/><circle cx="13" cy="13.5" r="2.6" fill="none" stroke="#f0a422" stroke-width="1.8"/><circle cx="13" cy="13.5" r="3.8" fill="none" stroke="#f0a422" stroke-width="1.2" stroke-dasharray="1.4 1.5"/></g></svg><div class="a" style="left:1247.5px;top:774.6px;width:32.9px;height:32.4px;background:#5c5c5c;border-radius:3px"></div><svg class="a" style="left:1247.5px;top:774.6px" width="33" height="33" viewBox="0 0 33 33"><path d="M15.2 5.400v19M6 14.900h18.5" stroke="#f0f0f0" stroke-width="4.2"/><path d="M21 22l5.5-5.500M24.3 18.700l1.6 1.600M26 17l1.6 1.6" stroke="#45c2c0" stroke-width="1.7" fill="none"/><circle cx="19.3" cy="23.9" r="2.5" fill="none" stroke="#45c2c0" stroke-width="1.8"/></svg><div class="a" style="left:1284.0px;top:774.6px;width:36.0px;height:15.1px;background:#5c5c5c;border-radius:2px"></div><div class="a" style="left:1284.0px;top:791.9px;width:36.0px;height:15.1px;background:#5c5c5c;border-radius:2px"></div><div class="t" style="left:1285.2px;top:779.6px;font-size:8.6px;color:#dcdcdc;transform:scaleX(0.963);transform-origin:0 0;">Auto Key</div><div class="t" style="left:1286.9px;top:796.9px;font-size:8.6px;color:#dcdcdc;transform:scaleX(0.979);transform-origin:0 0;">Set Key</div><div class="a" style="left:1323.6px;top:774.0px;width:89.5px;height:15.0px;background:#5c5c5c;"></div><div class="t" style="left:1327.7px;top:778.9px;font-size:8.6px;color:#dcdcdc;transform:scaleX(0.953);transform-origin:0 0;">Selected</div><div class="a" style="left:1402px;top:780px;width:0;height:0;border-left:3px solid transparent;border-right:3px solid transparent;border-top:4px solid #eee"></div><svg class="a" style="left:1322.0px;top:789.8px" width="20" height="20" viewBox="0 0 20 20"><g fill="none" stroke="#45c2c0" stroke-width="1.5"><path d="M5 16c.5-4 1.5-6.5 3-8.500M15 16c-.5-4-1.5-6.5-3-8.5"/></g><circle cx="6.5" cy="5.5" r="1.8" fill="none" stroke="#eee" stroke-width="1.2"/><circle cx="13.5" cy="5.5" r="1.8" fill="none" stroke="#eee" stroke-width="1.2"/><path d="M8.3 5.500h3.4" stroke="#eee" stroke-width="1"/><path d="M19 15v4h-4z" fill="#ddd"/></svg><div class="a" style="left:1344.5px;top:792.6px;width:68.6px;height:15.1px;background:#5c5c5c;border-radius:2px"></div><div class="t" style="left:1353.6px;top:797.4px;font-size:8.6px;color:#dcdcdc;transform:scaleX(1.019);transform-origin:0 0;">Key Filters...</div><svg class="a" style="left:1419.2px;top:772.3px" width="20" height="20" viewBox="0 0 20 20"><g transform="translate(10.0 10.0) scale(0.84) translate(-10.0 -10.0)"><circle cx="11.5" cy="8" r="4.3" fill="none" stroke="#eee" stroke-width="1.7"/><path d="M8.5 11l-4.5 5" stroke="#eee" stroke-width="2"/></g></svg><svg class="a" style="left:1437.2px;top:772.3px" width="20" height="20" viewBox="0 0 20 20"><g transform="translate(10.0 10.0) scale(0.84) translate(-10.0 -10.0)"><circle cx="7.5" cy="11" r="3" fill="none" stroke="#eee" stroke-width="1.4"/><path d="M5.5 13.500l-3 3.5" stroke="#eee" stroke-width="1.6"/><g fill="#45c2c0"><rect x="10" y="3" width="3.5" height="3.5"/><rect x="14.5" y="3" width="3.5" height="3.5"/><rect x="12" y="8" width="3.5" height="3.5"/><rect x="15" y="12" width="3" height="3"/></g></g></svg><svg class="a" style="left:1455.2px;top:772.3px" width="20" height="20" viewBox="0 0 20 20"><g transform="translate(10.0 10.0) scale(0.84) translate(-10.0 -10.0)"><path d="M10 5l5 2.500v5.500L10 15.5 5 13V7.500z" fill="#45c2c0"/><path d="M5 7.500L10 10l5-2.500M10 10v5.5" stroke="#1f7f7d" stroke-width=".8" fill="none"/><path d="M2.5 6v-3h3M14.5 3h3v3M17.5 14v3h-3M5.5 17h-3v-3" fill="none" stroke="#eee" stroke-width="1.3"/><path d="M19 15v4h-4z" fill="#ddd"/></g></svg><svg class="a" style="left:1473.8px;top:772.3px" width="20" height="20" viewBox="0 0 20 20"><g transform="translate(10.0 10.0) scale(0.84) translate(-10.0 -10.0)"><path d="M11 5.500l4 2v5l-4 2-4-2v-5z" fill="#45c2c0"/><path d="M3 12h4M3 12l2-2M3 12l2 2M11 3v3M9.5 4.500L11 3l1.5 1.5" stroke="#eee" stroke-width="1.2" fill="none"/><path d="M19 15v4h-4z" fill="#ddd"/></g></svg><svg class="a" style="left:1419.2px;top:789.8px" width="20" height="20" viewBox="0 0 20 20"><g transform="translate(10.0 10.0) scale(0.84) translate(-10.0 -10.0)"><path d="M5 4.500l10 5.5-10 5.5" fill="none" stroke="#eee" stroke-width="1.5"/><path d="M9 7.500a4 4 0 0 1 0 5" fill="none" stroke="#eee" stroke-width="1.2"/><path d="M19 15v4h-4z" fill="#ddd"/></g></svg><svg class="a" style="left:1437.2px;top:789.8px" width="20" height="20" viewBox="0 0 20 20"><g transform="translate(10.0 10.0) scale(0.84) translate(-10.0 -10.0)"><path d="M6 11V6.500a1 1 0 0 1 2 0V5a1 1 0 0 1 2 0v-.5a1 1 0 0 1 2 0V6a1 1 0 0 1 2 0v6c0 3-1.5 4.5-4 4.500S6.5 15.5 5 13l-1.5-2.500c.8-.8 1.8-.5 2.5.5z" fill="#e4e4e4"/><path d="M19 15v4h-4z" fill="#ddd"/></g></svg><svg class="a" style="left:1455.2px;top:789.8px" width="20" height="20" viewBox="0 0 20 20"><g transform="translate(10.0 10.0) scale(0.84) translate(-10.0 -10.0)"><ellipse cx="9.5" cy="10" rx="7" ry="3.5" transform="rotate(-35 9.5 10)" fill="none" stroke="#eee" stroke-width="1.3"/><circle cx="8" cy="9" r="3" fill="#45c2c0"/><path d="M12 6l3-2" stroke="#45c2c0" stroke-width="1.5"/><path d="M19 15v4h-4z" fill="#ddd"/></g></svg><svg class="a" style="left:1473.8px;top:789.8px" width="20" height="20" viewBox="0 0 20 20"><g transform="translate(10.0 10.0) scale(0.84) translate(-10.0 -10.0)"><rect x="3.5" y="3.5" width="13" height="13" fill="none" stroke="#eee" stroke-width="1.4"/><rect x="3.5" y="10" width="6.5" height="6.5" fill="#eee"/><path d="M11 9l4.5-4.500M12.5 4.500h3v3" stroke="#eee" stroke-width="1.3" fill="none"/></g></svg><div class="a" style="left:0.0px;top:813.0px;width:1035.0px;height:2.0px;background:#222c42;"></div><div class="a" style="left:38.0px;top:813.0px;width:223.0px;height:2.0px;background:#fafafa;"></div><div class="a" style="left:609.0px;top:813.0px;width:37.0px;height:2.0px;background:#5b627c;"></div>
</body></html>
